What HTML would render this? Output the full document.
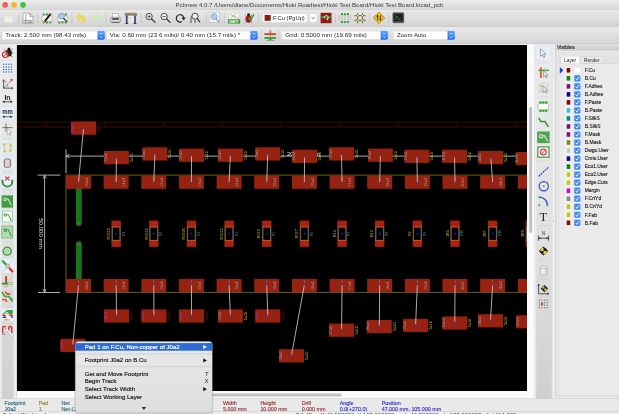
<!DOCTYPE html>
<html><head><meta charset="utf-8"><title>Pcbnew</title>
<style>
html,body{margin:0;padding:0;background:#ececec;overflow:hidden}
svg{display:block;will-change:transform}
text{font-family:"Liberation Sans",sans-serif;white-space:pre}
.serif{font-family:"Liberation Serif",serif}
</style></head><body>
<svg width="619" height="414" viewBox="0 0 619 414">
<defs>
<linearGradient id="gT" x1="0" y1="0" x2="0" y2="1"><stop offset="0" stop-color="#ededed"/><stop offset="1" stop-color="#d8d8d8"/></linearGradient>
<linearGradient id="gB1" x1="0" y1="0" x2="0" y2="1"><stop offset="0" stop-color="#e8e8e8"/><stop offset="1" stop-color="#d3d3d3"/></linearGradient>
<linearGradient id="gB2" x1="0" y1="0" x2="0" y2="1"><stop offset="0" stop-color="#e9e9e9"/><stop offset="1" stop-color="#d5d5d5"/></linearGradient>
<linearGradient id="gV" x1="0" y1="0" x2="0" y2="1"><stop offset="0" stop-color="#ebebeb"/><stop offset="0.5" stop-color="#e2e2e2"/><stop offset="1" stop-color="#d0d0d0"/></linearGradient>
<linearGradient id="gP" x1="0" y1="0" x2="0" y2="1"><stop offset="0" stop-color="#e0e0e0"/><stop offset="1" stop-color="#cbcbcb"/></linearGradient>
<linearGradient id="gBlue" x1="0" y1="0" x2="0" y2="1"><stop offset="0" stop-color="#5aa2fa"/><stop offset="1" stop-color="#1f6df2"/></linearGradient>
<linearGradient id="gMenu" x1="0" y1="0" x2="0" y2="1"><stop offset="0" stop-color="#e9e9e9"/><stop offset="1" stop-color="#dedede"/></linearGradient>
<clipPath id="cv"><rect x="17" y="45" width="510" height="346"/></clipPath>
<clipPath id="bot"><rect x="0" y="411.5" width="619" height="2.5"/></clipPath>
</defs>

<rect x="0" y="0" width="619" height="414" fill="#ececec" />
<rect x="0" y="0" width="619" height="9.5" fill="url(#gT)" />
<rect x="0" y="9.5" width="619" height="0.6" fill="#c9c9c9" />
<rect x="0" y="10" width="619" height="16.5" fill="url(#gB1)" />
<rect x="0" y="26.4" width="619" height="0.6" fill="#c2c2c2" />
<rect x="0" y="27" width="619" height="16.5" fill="url(#gB2)" />
<rect x="0" y="43.4" width="619" height="0.6" fill="#bcbcbc" />
<circle cx="5.2" cy="4.9" r="2.8" fill="#f25e57"/>
<circle cx="14.1" cy="4.9" r="2.8" fill="#f5b52f"/>
<circle cx="23.0" cy="4.9" r="2.8" fill="#3cc23f"/>
<text x="309.5" y="7.1" font-size="6.1" fill="#3c3c3c" textLength="268" lengthAdjust="spacingAndGlyphs" text-anchor="middle">Pcbnew 4.0.7 /Users/dlane/Documents/Hioki Roadtest/Hioki Test Board/Hioki Test Board.kicad_pcb</text>
<rect x="17" y="45" width="510" height="346" fill="#000" />
<g clip-path="url(#cv)">
<line x1="17" y1="122" x2="527" y2="122" stroke="#54100c" stroke-width="0.7" />
<line x1="17" y1="127.1" x2="527" y2="127.1" stroke="#54100c" stroke-width="0.7" />
<line x1="46.2" y1="122" x2="46.2" y2="127.1" stroke="#54100c" stroke-width="0.7" />
<line x1="104.9" y1="122" x2="104.9" y2="127.1" stroke="#54100c" stroke-width="0.7" />
<line x1="163.60000000000002" y1="122" x2="163.60000000000002" y2="127.1" stroke="#54100c" stroke-width="0.7" />
<line x1="222.3" y1="122" x2="222.3" y2="127.1" stroke="#54100c" stroke-width="0.7" />
<line x1="281.0" y1="122" x2="281.0" y2="127.1" stroke="#54100c" stroke-width="0.7" />
<line x1="339.7" y1="122" x2="339.7" y2="127.1" stroke="#54100c" stroke-width="0.7" />
<line x1="398.40000000000003" y1="122" x2="398.40000000000003" y2="127.1" stroke="#54100c" stroke-width="0.7" />
<line x1="457.1" y1="122" x2="457.1" y2="127.1" stroke="#54100c" stroke-width="0.7" />
<line x1="515.8000000000001" y1="122" x2="515.8000000000001" y2="127.1" stroke="#54100c" stroke-width="0.7" />
<line x1="66" y1="175.1" x2="527" y2="175.1" stroke="#786a1a" stroke-width="0.9" />
<line x1="66" y1="292.4" x2="527" y2="292.4" stroke="#786a1a" stroke-width="0.9" />
<line x1="66" y1="175.1" x2="66" y2="292.4" stroke="#786a1a" stroke-width="0.9" />
<line x1="66" y1="156.1" x2="527" y2="156.1" stroke="#d8d8d8" stroke-width="0.8" />
<line x1="66" y1="149.4" x2="66" y2="173.4" stroke="#d8d8d8" stroke-width="0.8" />
<path d="M69.5 154.3 L66 156.1 L69.5 157.9" fill="none" stroke="#d8d8d8" stroke-width="0.7"/>
<text x="287" y="155.6" font-size="6" fill="#e8e8e8" textLength="33" lengthAdjust="spacingAndGlyphs">200.000 mm</text>
<line x1="44.6" y1="175.3" x2="44.6" y2="292.3" stroke="#d8d8d8" stroke-width="0.8" />
<line x1="37.6" y1="175.1" x2="60.3" y2="175.1" stroke="#d8d8d8" stroke-width="0.8" />
<line x1="38" y1="292.5" x2="60" y2="292.5" stroke="#d8d8d8" stroke-width="0.8" />
<path d="M43 178.6 L44.6 175.3 L46.2 178.6 M43 289 L44.6 292.3 L46.2 289" fill="none" stroke="#d8d8d8" stroke-width="0.7"/>
<text transform="translate(39.3 218.2) rotate(90)" font-size="6" fill="#dcdcdc" textLength="30.6" lengthAdjust="spacingAndGlyphs">50.000 mm</text>
<path d="M75.8 188 V223 A3 3 0 0 0 81.8 223 V188 Z" fill="#1d721d"/>
<path d="M75.8 280 V244.3 A3 3 0 0 1 81.8 244.3 V280 Z" fill="#1d721d"/>
<circle cx="78.8" cy="223" r="0.7" fill="#58a858"/><circle cx="78.8" cy="244.3" r="0.7" fill="#58a858"/>
<rect x="71" y="121.5" width="25" height="13.2" fill="#97220f" />
<text transform="translate(73.60 132.60) rotate(-90)" font-size="4" fill="#b030b0" textLength="9" lengthAdjust="spacingAndGlyphs">J0a1</text>
<text transform="translate(99.90 132.30) rotate(-90)" font-size="3.9" fill="#7a1818" textLength="8.4" lengthAdjust="spacingAndGlyphs">J0a1</text>
<rect x="66.0" y="175.6" width="25" height="13.2" fill="#97220f" />
<text transform="translate(87.80 186.70) rotate(-90)" font-size="4" fill="#9aa0a8" textLength="9" lengthAdjust="spacingAndGlyphs">J0a1</text>
<rect x="66.0" y="279" width="25" height="13.2" fill="#97220f" />
<text transform="translate(87.80 290.10) rotate(-90)" font-size="4" fill="#9aa0a8" textLength="9" lengthAdjust="spacingAndGlyphs">J0a1</text>
<rect x="60.3" y="338.8" width="25" height="13.2" fill="#97220f" />
<text transform="translate(62.90 349.90) rotate(-90)" font-size="4" fill="#b030b0" textLength="9" lengthAdjust="spacingAndGlyphs">J0a1</text>
<text transform="translate(89.20 349.60) rotate(-90)" font-size="3.9" fill="#7a1818" textLength="8.4" lengthAdjust="spacingAndGlyphs">J0a1</text>
<rect x="103.9" y="151" width="25" height="13.2" fill="#97220f" />
<text transform="translate(106.50 162.10) rotate(-90)" font-size="4" fill="#9aa0a8" textLength="9" lengthAdjust="spacingAndGlyphs">J1a2</text>
<text transform="translate(132.80 161.80) rotate(-90)" font-size="3.9" fill="#c8c020" textLength="8.4" lengthAdjust="spacingAndGlyphs">5x10</text>
<rect x="103.65" y="175.6" width="25" height="13.2" fill="#97220f" />
<text transform="translate(125.45 186.70) rotate(-90)" font-size="4" fill="#9aa0a8" textLength="9" lengthAdjust="spacingAndGlyphs">J1a1</text>
<rect x="103.65" y="279" width="25" height="13.2" fill="#97220f" />
<text transform="translate(125.45 290.10) rotate(-90)" font-size="4" fill="#9aa0a8" textLength="9" lengthAdjust="spacingAndGlyphs">J1a1</text>
<rect x="104" y="309.4" width="25" height="13.2" fill="#97220f" />
<text transform="translate(106.60 320.50) rotate(-90)" font-size="4" fill="#b030b0" textLength="9" lengthAdjust="spacingAndGlyphs">J1a1</text>
<text transform="translate(132.90 320.20) rotate(-90)" font-size="3.9" fill="#7a1818" textLength="8.4" lengthAdjust="spacingAndGlyphs">J0a1</text>
<rect x="142.4" y="147.3" width="25" height="13.2" fill="#97220f" />
<text transform="translate(145.00 158.40) rotate(-90)" font-size="4" fill="#9aa0a8" textLength="9" lengthAdjust="spacingAndGlyphs">J2a2</text>
<text transform="translate(171.30 158.10) rotate(-90)" font-size="3.9" fill="#c8c020" textLength="8.4" lengthAdjust="spacingAndGlyphs">5x10</text>
<rect x="141.3" y="175.6" width="25" height="13.2" fill="#97220f" />
<text transform="translate(163.10 186.70) rotate(-90)" font-size="4" fill="#9aa0a8" textLength="9" lengthAdjust="spacingAndGlyphs">J2a1</text>
<rect x="141.3" y="279" width="25" height="13.2" fill="#97220f" />
<text transform="translate(163.10 290.10) rotate(-90)" font-size="4" fill="#9aa0a8" textLength="9" lengthAdjust="spacingAndGlyphs">J2a1</text>
<rect x="141.4" y="309.4" width="25" height="13.2" fill="#97220f" />
<text transform="translate(144.00 320.50) rotate(-90)" font-size="4" fill="#b030b0" textLength="9" lengthAdjust="spacingAndGlyphs">J2a1</text>
<text transform="translate(170.30 320.20) rotate(-90)" font-size="3.9" fill="#7a1818" textLength="8.4" lengthAdjust="spacingAndGlyphs">J0a1</text>
<rect x="179" y="148.6" width="25" height="13.2" fill="#97220f" />
<text transform="translate(181.60 159.70) rotate(-90)" font-size="4" fill="#9aa0a8" textLength="9" lengthAdjust="spacingAndGlyphs">J3a2</text>
<text transform="translate(207.90 159.40) rotate(-90)" font-size="3.9" fill="#c8c020" textLength="8.4" lengthAdjust="spacingAndGlyphs">5x10</text>
<rect x="178.95" y="175.6" width="25" height="13.2" fill="#97220f" />
<text transform="translate(200.75 186.70) rotate(-90)" font-size="4" fill="#9aa0a8" textLength="9" lengthAdjust="spacingAndGlyphs">J3a1</text>
<rect x="178.95" y="279" width="25" height="13.2" fill="#97220f" />
<text transform="translate(200.75 290.10) rotate(-90)" font-size="4" fill="#9aa0a8" textLength="9" lengthAdjust="spacingAndGlyphs">J3a1</text>
<rect x="179" y="309.4" width="25" height="13.2" fill="#97220f" />
<text transform="translate(181.60 320.50) rotate(-90)" font-size="4" fill="#b030b0" textLength="9" lengthAdjust="spacingAndGlyphs">J3a1</text>
<text transform="translate(207.90 320.20) rotate(-90)" font-size="3.9" fill="#7a1818" textLength="8.4" lengthAdjust="spacingAndGlyphs">J0a1</text>
<rect x="217.9" y="148.6" width="25" height="13.2" fill="#97220f" />
<text transform="translate(220.50 159.70) rotate(-90)" font-size="4" fill="#9aa0a8" textLength="9" lengthAdjust="spacingAndGlyphs">J4a2</text>
<text transform="translate(246.80 159.40) rotate(-90)" font-size="3.9" fill="#c8c020" textLength="8.4" lengthAdjust="spacingAndGlyphs">5x10</text>
<rect x="216.6" y="175.6" width="25" height="13.2" fill="#97220f" />
<text transform="translate(238.40 186.70) rotate(-90)" font-size="4" fill="#9aa0a8" textLength="9" lengthAdjust="spacingAndGlyphs">J4a1</text>
<rect x="216.6" y="279" width="25" height="13.2" fill="#97220f" />
<text transform="translate(238.40 290.10) rotate(-90)" font-size="4" fill="#9aa0a8" textLength="9" lengthAdjust="spacingAndGlyphs">J4a1</text>
<rect x="217.9" y="309.4" width="25" height="13.2" fill="#97220f" />
<text transform="translate(220.50 320.50) rotate(-90)" font-size="4" fill="#9aa0a8" textLength="9" lengthAdjust="spacingAndGlyphs">J4a2</text>
<text transform="translate(246.80 320.20) rotate(-90)" font-size="3.9" fill="#c8c020" textLength="8.4" lengthAdjust="spacingAndGlyphs">5x10</text>
<rect x="255.2" y="147.3" width="25" height="13.2" fill="#97220f" />
<text transform="translate(257.80 158.40) rotate(-90)" font-size="4" fill="#9aa0a8" textLength="9" lengthAdjust="spacingAndGlyphs">J5a2</text>
<text transform="translate(284.10 158.10) rotate(-90)" font-size="3.9" fill="#c8c020" textLength="8.4" lengthAdjust="spacingAndGlyphs">5x10</text>
<rect x="254.25" y="175.6" width="25" height="13.2" fill="#97220f" />
<text transform="translate(276.05 186.70) rotate(-90)" font-size="4" fill="#9aa0a8" textLength="9" lengthAdjust="spacingAndGlyphs">J5a1</text>
<rect x="254.25" y="279" width="25" height="13.2" fill="#97220f" />
<text transform="translate(276.05 290.10) rotate(-90)" font-size="4" fill="#9aa0a8" textLength="9" lengthAdjust="spacingAndGlyphs">J5a1</text>
<rect x="255.3" y="309.4" width="25" height="13.2" fill="#97220f" />
<text transform="translate(257.90 320.50) rotate(-90)" font-size="4" fill="#b030b0" textLength="9" lengthAdjust="spacingAndGlyphs">J5a1</text>
<text transform="translate(284.20 320.20) rotate(-90)" font-size="3.9" fill="#7a1818" textLength="8.4" lengthAdjust="spacingAndGlyphs">J0a1</text>
<rect x="292" y="149.7" width="25" height="13.2" fill="#97220f" />
<text transform="translate(294.60 160.80) rotate(-90)" font-size="4" fill="#9aa0a8" textLength="9" lengthAdjust="spacingAndGlyphs">J6a2</text>
<text transform="translate(320.90 160.50) rotate(-90)" font-size="3.9" fill="#c8c020" textLength="8.4" lengthAdjust="spacingAndGlyphs">5x10</text>
<rect x="291.9" y="175.6" width="25" height="13.2" fill="#97220f" />
<text transform="translate(313.70 186.70) rotate(-90)" font-size="4" fill="#9aa0a8" textLength="9" lengthAdjust="spacingAndGlyphs">J6a1</text>
<rect x="291.9" y="279" width="25" height="13.2" fill="#97220f" />
<text transform="translate(313.70 290.10) rotate(-90)" font-size="4" fill="#9aa0a8" textLength="9" lengthAdjust="spacingAndGlyphs">J6a1</text>
<rect x="279" y="349.2" width="25" height="13.2" fill="#97220f" />
<text transform="translate(281.60 360.30) rotate(-90)" font-size="4" fill="#9aa0a8" textLength="9" lengthAdjust="spacingAndGlyphs">J6a2</text>
<text transform="translate(307.90 360.00) rotate(-90)" font-size="3.9" fill="#c8c020" textLength="8.4" lengthAdjust="spacingAndGlyphs">5x10</text>
<rect x="329" y="147.3" width="25" height="13.2" fill="#97220f" />
<text transform="translate(331.60 158.40) rotate(-90)" font-size="4" fill="#9aa0a8" textLength="9" lengthAdjust="spacingAndGlyphs">J7a2</text>
<text transform="translate(357.90 158.10) rotate(-90)" font-size="3.9" fill="#c8c020" textLength="8.4" lengthAdjust="spacingAndGlyphs">5x10</text>
<rect x="329.55" y="175.6" width="25" height="13.2" fill="#97220f" />
<text transform="translate(351.35 186.70) rotate(-90)" font-size="4" fill="#9aa0a8" textLength="9" lengthAdjust="spacingAndGlyphs">J7a1</text>
<rect x="329.55" y="279" width="25" height="13.2" fill="#97220f" />
<text transform="translate(351.35 290.10) rotate(-90)" font-size="4" fill="#9aa0a8" textLength="9" lengthAdjust="spacingAndGlyphs">J7a1</text>
<rect x="329.1" y="323.6" width="25" height="13.2" fill="#97220f" />
<text transform="translate(331.70 334.70) rotate(-90)" font-size="4" fill="#9aa0a8" textLength="9" lengthAdjust="spacingAndGlyphs">J7a2</text>
<text transform="translate(358.00 334.40) rotate(-90)" font-size="3.9" fill="#c8c020" textLength="8.4" lengthAdjust="spacingAndGlyphs">5x10</text>
<rect x="367.9" y="148.6" width="25" height="13.2" fill="#97220f" />
<text transform="translate(370.50 159.70) rotate(-90)" font-size="4" fill="#9aa0a8" textLength="9" lengthAdjust="spacingAndGlyphs">J8a2</text>
<text transform="translate(396.80 159.40) rotate(-90)" font-size="3.9" fill="#c8c020" textLength="8.4" lengthAdjust="spacingAndGlyphs">5x10</text>
<rect x="367.2" y="175.6" width="25" height="13.2" fill="#97220f" />
<text transform="translate(389.00 186.70) rotate(-90)" font-size="4" fill="#9aa0a8" textLength="9" lengthAdjust="spacingAndGlyphs">J8a1</text>
<rect x="367.2" y="279" width="25" height="13.2" fill="#97220f" />
<text transform="translate(389.00 290.10) rotate(-90)" font-size="4" fill="#9aa0a8" textLength="9" lengthAdjust="spacingAndGlyphs">J8a1</text>
<rect x="366.8" y="320" width="25" height="13.2" fill="#97220f" />
<text transform="translate(369.40 331.10) rotate(-90)" font-size="4" fill="#9aa0a8" textLength="9" lengthAdjust="spacingAndGlyphs">J8a2</text>
<text transform="translate(395.70 330.80) rotate(-90)" font-size="3.9" fill="#c8c020" textLength="8.4" lengthAdjust="spacingAndGlyphs">5x10</text>
<rect x="404.4" y="149.7" width="25" height="13.2" fill="#97220f" />
<text transform="translate(407.00 160.80) rotate(-90)" font-size="4" fill="#9aa0a8" textLength="9" lengthAdjust="spacingAndGlyphs">J9a2</text>
<text transform="translate(433.30 160.50) rotate(-90)" font-size="3.9" fill="#c8c020" textLength="8.4" lengthAdjust="spacingAndGlyphs">5x10</text>
<rect x="404.85" y="175.6" width="25" height="13.2" fill="#97220f" />
<text transform="translate(426.65 186.70) rotate(-90)" font-size="4" fill="#9aa0a8" textLength="9" lengthAdjust="spacingAndGlyphs">J9a1</text>
<rect x="404.85" y="279" width="25" height="13.2" fill="#97220f" />
<text transform="translate(426.65 290.10) rotate(-90)" font-size="4" fill="#9aa0a8" textLength="9" lengthAdjust="spacingAndGlyphs">J9a1</text>
<rect x="403.1" y="318.8" width="25" height="13.2" fill="#97220f" />
<text transform="translate(405.70 329.90) rotate(-90)" font-size="4" fill="#9aa0a8" textLength="9" lengthAdjust="spacingAndGlyphs">J9a2</text>
<text transform="translate(432.00 329.60) rotate(-90)" font-size="3.9" fill="#c8c020" textLength="8.4" lengthAdjust="spacingAndGlyphs">5x10</text>
<rect x="442" y="149.7" width="25" height="13.2" fill="#97220f" />
<text transform="translate(444.60 160.80) rotate(-90)" font-size="4" fill="#9aa0a8" textLength="9" lengthAdjust="spacingAndGlyphs">J10a2</text>
<text transform="translate(470.90 160.50) rotate(-90)" font-size="3.9" fill="#c8c020" textLength="8.4" lengthAdjust="spacingAndGlyphs">5x10</text>
<rect x="442.5" y="175.6" width="25" height="13.2" fill="#97220f" />
<text transform="translate(464.30 186.70) rotate(-90)" font-size="4" fill="#9aa0a8" textLength="9" lengthAdjust="spacingAndGlyphs">J10a1</text>
<rect x="442.5" y="279" width="25" height="13.2" fill="#97220f" />
<text transform="translate(464.30 290.10) rotate(-90)" font-size="4" fill="#9aa0a8" textLength="9" lengthAdjust="spacingAndGlyphs">J10a1</text>
<rect x="442.3" y="316.4" width="25" height="13.2" fill="#97220f" />
<text transform="translate(444.90 327.50) rotate(-90)" font-size="4" fill="#9aa0a8" textLength="9" lengthAdjust="spacingAndGlyphs">J10a2</text>
<text transform="translate(471.20 327.20) rotate(-90)" font-size="3.9" fill="#c8c020" textLength="8.4" lengthAdjust="spacingAndGlyphs">5x10</text>
<rect x="478.3" y="151" width="25" height="13.2" fill="#97220f" />
<text transform="translate(480.90 162.10) rotate(-90)" font-size="4" fill="#9aa0a8" textLength="9" lengthAdjust="spacingAndGlyphs">J11a2</text>
<text transform="translate(507.20 161.80) rotate(-90)" font-size="3.9" fill="#c8c020" textLength="8.4" lengthAdjust="spacingAndGlyphs">5x10</text>
<rect x="480.15" y="175.6" width="25" height="13.2" fill="#97220f" />
<text transform="translate(501.95 186.70) rotate(-90)" font-size="4" fill="#9aa0a8" textLength="9" lengthAdjust="spacingAndGlyphs">J11a1</text>
<rect x="480.15" y="279" width="25" height="13.2" fill="#97220f" />
<text transform="translate(501.95 290.10) rotate(-90)" font-size="4" fill="#9aa0a8" textLength="9" lengthAdjust="spacingAndGlyphs">J11a1</text>
<rect x="478" y="314.2" width="25" height="13.2" fill="#97220f" />
<text transform="translate(480.60 325.30) rotate(-90)" font-size="4" fill="#9aa0a8" textLength="9" lengthAdjust="spacingAndGlyphs">J11a2</text>
<text transform="translate(506.90 325.00) rotate(-90)" font-size="3.9" fill="#c8c020" textLength="8.4" lengthAdjust="spacingAndGlyphs">5x10</text>
<rect x="515.8" y="152" width="25" height="13.2" fill="#97220f" />
<text transform="translate(518.40 163.10) rotate(-90)" font-size="4" fill="#9aa0a8" textLength="9" lengthAdjust="spacingAndGlyphs">J12a2</text>
<text transform="translate(544.70 162.80) rotate(-90)" font-size="3.9" fill="#c8c020" textLength="8.4" lengthAdjust="spacingAndGlyphs">5x10</text>
<rect x="517.8" y="175.6" width="25" height="13.2" fill="#97220f" />
<text transform="translate(539.60 186.70) rotate(-90)" font-size="4" fill="#9aa0a8" textLength="9" lengthAdjust="spacingAndGlyphs">J12a1</text>
<rect x="517.8" y="279" width="25" height="13.2" fill="#97220f" />
<text transform="translate(539.60 290.10) rotate(-90)" font-size="4" fill="#9aa0a8" textLength="9" lengthAdjust="spacingAndGlyphs">J12a1</text>
<rect x="516" y="315.2" width="25" height="13.2" fill="#97220f" />
<text transform="translate(518.60 326.30) rotate(-90)" font-size="4" fill="#9aa0a8" textLength="9" lengthAdjust="spacingAndGlyphs">J12a2</text>
<text transform="translate(544.90 326.00) rotate(-90)" font-size="3.9" fill="#c8c020" textLength="8.4" lengthAdjust="spacingAndGlyphs">5x10</text>
<rect x="111.45" y="220.6" width="9.4" height="26.3" fill="#a8220f" />
<rect x="112.35" y="227.6" width="7.6" height="12.2" fill="#000" />
<line x1="111.75" y1="226.9" x2="120.55" y2="226.9" stroke="#c8742a" stroke-width="0.6" />
<line x1="111.75" y1="240.5" x2="120.55" y2="240.5" stroke="#c8742a" stroke-width="0.6" />
<line x1="112.4" y1="227.2" x2="112.4" y2="240.2" stroke="#4f9a9a" stroke-width="0.7" />
<line x1="119.9" y1="227.2" x2="119.9" y2="240.2" stroke="#4f9a9a" stroke-width="0.7" />
<path d="M115.05 233.7 h2.2 M116.15 232.6 v2.2" stroke="#1c2ccc" stroke-width="0.7"/>
<text transform="translate(109.85 239.40) rotate(-90)" font-size="3.6" fill="#c4bc20" textLength="11.4" lengthAdjust="spacingAndGlyphs">R0015</text>
<text transform="translate(124.55 236.2) rotate(-90)" font-size="3.4" fill="#2a9a9a">R1</text>
<text x="116.15" y="225.4" font-size="2.6" fill="#6a5a58" text-anchor="middle">1</text>
<text x="116.15" y="244.9" font-size="2.6" fill="#6a5a58" text-anchor="middle">2</text>
<rect x="149.1" y="220.6" width="9.4" height="26.3" fill="#a8220f" />
<rect x="150.0" y="227.6" width="7.6" height="12.2" fill="#000" />
<line x1="149.40000000000003" y1="226.9" x2="158.20000000000002" y2="226.9" stroke="#c8742a" stroke-width="0.6" />
<line x1="149.40000000000003" y1="240.5" x2="158.20000000000002" y2="240.5" stroke="#c8742a" stroke-width="0.6" />
<line x1="150.05" y1="227.2" x2="150.05" y2="240.2" stroke="#4f9a9a" stroke-width="0.7" />
<line x1="157.55" y1="227.2" x2="157.55" y2="240.2" stroke="#4f9a9a" stroke-width="0.7" />
<path d="M152.70 233.7 h2.2 M153.80 232.6 v2.2" stroke="#1c2ccc" stroke-width="0.7"/>
<text transform="translate(147.50 239.40) rotate(-90)" font-size="3.6" fill="#c4bc20" textLength="11.4" lengthAdjust="spacingAndGlyphs">R0015</text>
<text transform="translate(162.20 236.2) rotate(-90)" font-size="3.4" fill="#2a9a9a">R2</text>
<text x="153.80" y="225.4" font-size="2.6" fill="#6a5a58" text-anchor="middle">1</text>
<text x="153.80" y="244.9" font-size="2.6" fill="#6a5a58" text-anchor="middle">2</text>
<rect x="186.75" y="220.6" width="9.4" height="26.3" fill="#a8220f" />
<rect x="187.65" y="227.6" width="7.6" height="12.2" fill="#000" />
<line x1="187.05" y1="226.9" x2="195.85" y2="226.9" stroke="#c8742a" stroke-width="0.6" />
<line x1="187.05" y1="240.5" x2="195.85" y2="240.5" stroke="#c8742a" stroke-width="0.6" />
<line x1="187.7" y1="227.2" x2="187.7" y2="240.2" stroke="#4f9a9a" stroke-width="0.7" />
<line x1="195.2" y1="227.2" x2="195.2" y2="240.2" stroke="#4f9a9a" stroke-width="0.7" />
<path d="M190.35 233.7 h2.2 M191.45 232.6 v2.2" stroke="#1c2ccc" stroke-width="0.7"/>
<text transform="translate(185.15 239.40) rotate(-90)" font-size="3.6" fill="#c4bc20" textLength="11.4" lengthAdjust="spacingAndGlyphs">R0025</text>
<text transform="translate(199.85 236.2) rotate(-90)" font-size="3.4" fill="#2a9a9a">R3</text>
<text x="191.45" y="225.4" font-size="2.6" fill="#6a5a58" text-anchor="middle">1</text>
<text x="191.45" y="244.9" font-size="2.6" fill="#6a5a58" text-anchor="middle">2</text>
<rect x="224.4" y="220.6" width="9.4" height="26.3" fill="#a8220f" />
<rect x="225.3" y="227.6" width="7.6" height="12.2" fill="#000" />
<line x1="224.70000000000002" y1="226.9" x2="233.5" y2="226.9" stroke="#c8742a" stroke-width="0.6" />
<line x1="224.70000000000002" y1="240.5" x2="233.5" y2="240.5" stroke="#c8742a" stroke-width="0.6" />
<line x1="225.35" y1="227.2" x2="225.35" y2="240.2" stroke="#4f9a9a" stroke-width="0.7" />
<line x1="232.85" y1="227.2" x2="232.85" y2="240.2" stroke="#4f9a9a" stroke-width="0.7" />
<path d="M228.00 233.7 h2.2 M229.10 232.6 v2.2" stroke="#1c2ccc" stroke-width="0.7"/>
<text transform="translate(222.80 239.40) rotate(-90)" font-size="3.6" fill="#c4bc20" textLength="11.4" lengthAdjust="spacingAndGlyphs">R0015</text>
<text transform="translate(237.50 236.2) rotate(-90)" font-size="3.4" fill="#2a9a9a">R4</text>
<text x="229.10" y="225.4" font-size="2.6" fill="#6a5a58" text-anchor="middle">1</text>
<text x="229.10" y="244.9" font-size="2.6" fill="#6a5a58" text-anchor="middle">2</text>
<rect x="262.05" y="220.6" width="9.4" height="26.3" fill="#a8220f" />
<rect x="262.95" y="227.6" width="7.6" height="12.2" fill="#000" />
<line x1="262.35" y1="226.9" x2="271.15000000000003" y2="226.9" stroke="#c8742a" stroke-width="0.6" />
<line x1="262.35" y1="240.5" x2="271.15000000000003" y2="240.5" stroke="#c8742a" stroke-width="0.6" />
<line x1="263.0" y1="227.2" x2="263.0" y2="240.2" stroke="#4f9a9a" stroke-width="0.7" />
<line x1="270.5" y1="227.2" x2="270.5" y2="240.2" stroke="#4f9a9a" stroke-width="0.7" />
<path d="M265.65 233.7 h2.2 M266.75 232.6 v2.2" stroke="#1c2ccc" stroke-width="0.7"/>
<text transform="translate(260.45 238.30) rotate(-90)" font-size="3.6" fill="#c4bc20" textLength="9.2" lengthAdjust="spacingAndGlyphs">R015</text>
<text transform="translate(275.15 236.2) rotate(-90)" font-size="3.4" fill="#2a9a9a">R5</text>
<text x="266.75" y="225.4" font-size="2.6" fill="#6a5a58" text-anchor="middle">1</text>
<text x="266.75" y="244.9" font-size="2.6" fill="#6a5a58" text-anchor="middle">2</text>
<rect x="299.7" y="220.6" width="9.4" height="26.3" fill="#a8220f" />
<rect x="300.6" y="227.6" width="7.6" height="12.2" fill="#000" />
<line x1="300.0" y1="226.9" x2="308.8" y2="226.9" stroke="#c8742a" stroke-width="0.6" />
<line x1="300.0" y1="240.5" x2="308.8" y2="240.5" stroke="#c8742a" stroke-width="0.6" />
<line x1="300.65" y1="227.2" x2="300.65" y2="240.2" stroke="#4f9a9a" stroke-width="0.7" />
<line x1="308.15" y1="227.2" x2="308.15" y2="240.2" stroke="#4f9a9a" stroke-width="0.7" />
<path d="M303.30 233.7 h2.2 M304.40 232.6 v2.2" stroke="#1c2ccc" stroke-width="0.7"/>
<text transform="translate(298.10 238.30) rotate(-90)" font-size="3.6" fill="#c4bc20" textLength="9.2" lengthAdjust="spacingAndGlyphs">R027</text>
<text transform="translate(312.80 236.2) rotate(-90)" font-size="3.4" fill="#2a9a9a">R6</text>
<text x="304.40" y="225.4" font-size="2.6" fill="#6a5a58" text-anchor="middle">1</text>
<text x="304.40" y="244.9" font-size="2.6" fill="#6a5a58" text-anchor="middle">2</text>
<rect x="337.35" y="220.6" width="9.4" height="26.3" fill="#a8220f" />
<rect x="338.25" y="227.6" width="7.6" height="12.2" fill="#000" />
<line x1="337.65000000000003" y1="226.9" x2="346.45000000000005" y2="226.9" stroke="#c8742a" stroke-width="0.6" />
<line x1="337.65000000000003" y1="240.5" x2="346.45000000000005" y2="240.5" stroke="#c8742a" stroke-width="0.6" />
<line x1="338.3" y1="227.2" x2="338.3" y2="240.2" stroke="#4f9a9a" stroke-width="0.7" />
<line x1="345.8" y1="227.2" x2="345.8" y2="240.2" stroke="#4f9a9a" stroke-width="0.7" />
<path d="M340.95 233.7 h2.2 M342.05 232.6 v2.2" stroke="#1c2ccc" stroke-width="0.7"/>
<text transform="translate(335.75 237.10) rotate(-90)" font-size="3.6" fill="#c4bc20" textLength="6.8" lengthAdjust="spacingAndGlyphs">R15</text>
<text transform="translate(350.45 236.2) rotate(-90)" font-size="3.4" fill="#2a9a9a">R7</text>
<text x="342.05" y="225.4" font-size="2.6" fill="#6a5a58" text-anchor="middle">1</text>
<text x="342.05" y="244.9" font-size="2.6" fill="#6a5a58" text-anchor="middle">2</text>
<rect x="375.0" y="220.6" width="9.4" height="26.3" fill="#a8220f" />
<rect x="375.9" y="227.6" width="7.6" height="12.2" fill="#000" />
<line x1="375.3" y1="226.9" x2="384.1" y2="226.9" stroke="#c8742a" stroke-width="0.6" />
<line x1="375.3" y1="240.5" x2="384.1" y2="240.5" stroke="#c8742a" stroke-width="0.6" />
<line x1="375.95" y1="227.2" x2="375.95" y2="240.2" stroke="#4f9a9a" stroke-width="0.7" />
<line x1="383.45" y1="227.2" x2="383.45" y2="240.2" stroke="#4f9a9a" stroke-width="0.7" />
<path d="M378.60 233.7 h2.2 M379.70 232.6 v2.2" stroke="#1c2ccc" stroke-width="0.7"/>
<text transform="translate(373.40 237.10) rotate(-90)" font-size="3.6" fill="#c4bc20" textLength="6.8" lengthAdjust="spacingAndGlyphs">R15</text>
<text transform="translate(388.10 236.2) rotate(-90)" font-size="3.4" fill="#2a9a9a">R8</text>
<text x="379.70" y="225.4" font-size="2.6" fill="#6a5a58" text-anchor="middle">1</text>
<text x="379.70" y="244.9" font-size="2.6" fill="#6a5a58" text-anchor="middle">2</text>
<rect x="412.65" y="220.6" width="9.4" height="26.3" fill="#a8220f" />
<rect x="413.55" y="227.6" width="7.6" height="12.2" fill="#000" />
<line x1="412.95" y1="226.9" x2="421.75" y2="226.9" stroke="#c8742a" stroke-width="0.6" />
<line x1="412.95" y1="240.5" x2="421.75" y2="240.5" stroke="#c8742a" stroke-width="0.6" />
<line x1="413.59999999999997" y1="227.2" x2="413.59999999999997" y2="240.2" stroke="#4f9a9a" stroke-width="0.7" />
<line x1="421.09999999999997" y1="227.2" x2="421.09999999999997" y2="240.2" stroke="#4f9a9a" stroke-width="0.7" />
<path d="M416.25 233.7 h2.2 M417.35 232.6 v2.2" stroke="#1c2ccc" stroke-width="0.7"/>
<text transform="translate(411.05 236.00) rotate(-90)" font-size="3.6" fill="#c4bc20" textLength="4.6" lengthAdjust="spacingAndGlyphs">R3</text>
<text transform="translate(425.75 236.2) rotate(-90)" font-size="3.4" fill="#2a9a9a">R9</text>
<text x="417.35" y="225.4" font-size="2.6" fill="#6a5a58" text-anchor="middle">1</text>
<text x="417.35" y="244.9" font-size="2.6" fill="#6a5a58" text-anchor="middle">2</text>
<rect x="450.3" y="220.6" width="9.4" height="26.3" fill="#a8220f" />
<rect x="451.2" y="227.6" width="7.6" height="12.2" fill="#000" />
<line x1="450.6" y1="226.9" x2="459.40000000000003" y2="226.9" stroke="#c8742a" stroke-width="0.6" />
<line x1="450.6" y1="240.5" x2="459.40000000000003" y2="240.5" stroke="#c8742a" stroke-width="0.6" />
<line x1="451.25" y1="227.2" x2="451.25" y2="240.2" stroke="#4f9a9a" stroke-width="0.7" />
<line x1="458.75" y1="227.2" x2="458.75" y2="240.2" stroke="#4f9a9a" stroke-width="0.7" />
<path d="M453.90 233.7 h2.2 M455.00 232.6 v2.2" stroke="#1c2ccc" stroke-width="0.7"/>
<text transform="translate(448.70 237.10) rotate(-90)" font-size="3.6" fill="#c4bc20" textLength="6.8" lengthAdjust="spacingAndGlyphs">1R5</text>
<text transform="translate(463.40 236.2) rotate(-90)" font-size="3.4" fill="#2a9a9a">R10</text>
<text x="455.00" y="225.4" font-size="2.6" fill="#6a5a58" text-anchor="middle">1</text>
<text x="455.00" y="244.9" font-size="2.6" fill="#6a5a58" text-anchor="middle">2</text>
<rect x="487.95" y="220.6" width="9.4" height="26.3" fill="#a8220f" />
<rect x="488.85" y="227.6" width="7.6" height="12.2" fill="#000" />
<line x1="488.25" y1="226.9" x2="497.05" y2="226.9" stroke="#c8742a" stroke-width="0.6" />
<line x1="488.25" y1="240.5" x2="497.05" y2="240.5" stroke="#c8742a" stroke-width="0.6" />
<line x1="488.9" y1="227.2" x2="488.9" y2="240.2" stroke="#4f9a9a" stroke-width="0.7" />
<line x1="496.4" y1="227.2" x2="496.4" y2="240.2" stroke="#4f9a9a" stroke-width="0.7" />
<path d="M491.55 233.7 h2.2 M492.65 232.6 v2.2" stroke="#1c2ccc" stroke-width="0.7"/>
<text transform="translate(486.35 237.10) rotate(-90)" font-size="3.6" fill="#c4bc20" textLength="6.8" lengthAdjust="spacingAndGlyphs">2R7</text>
<text transform="translate(501.05 236.2) rotate(-90)" font-size="3.4" fill="#2a9a9a">R11</text>
<text x="492.65" y="225.4" font-size="2.6" fill="#6a5a58" text-anchor="middle">1</text>
<text x="492.65" y="244.9" font-size="2.6" fill="#6a5a58" text-anchor="middle">2</text>
<rect x="525.6" y="220.6" width="9.4" height="26.3" fill="#a8220f" />
<rect x="526.5" y="227.6" width="7.6" height="12.2" fill="#000" />
<line x1="525.8999999999999" y1="226.9" x2="534.6999999999999" y2="226.9" stroke="#c8742a" stroke-width="0.6" />
<line x1="525.8999999999999" y1="240.5" x2="534.6999999999999" y2="240.5" stroke="#c8742a" stroke-width="0.6" />
<line x1="526.55" y1="227.2" x2="526.55" y2="240.2" stroke="#4f9a9a" stroke-width="0.7" />
<line x1="534.05" y1="227.2" x2="534.05" y2="240.2" stroke="#4f9a9a" stroke-width="0.7" />
<path d="M529.20 233.7 h2.2 M530.30 232.6 v2.2" stroke="#1c2ccc" stroke-width="0.7"/>
<text transform="translate(524.00 237.10) rotate(-90)" font-size="3.6" fill="#c4bc20" textLength="6.8" lengthAdjust="spacingAndGlyphs">3R0</text>
<text transform="translate(538.70 236.2) rotate(-90)" font-size="3.4" fill="#2a9a9a">R12</text>
<text x="530.30" y="225.4" font-size="2.6" fill="#6a5a58" text-anchor="middle">1</text>
<text x="530.30" y="244.9" font-size="2.6" fill="#6a5a58" text-anchor="middle">2</text>
<line x1="83.5" y1="128.6" x2="78.5" y2="181.9" stroke="#d4d4d4" stroke-width="0.8" />
<line x1="78.5" y1="284.7" x2="72.8" y2="344.8" stroke="#d4d4d4" stroke-width="0.8" />
<line x1="116.4" y1="158.1" x2="116.15" y2="181.9" stroke="#d4d4d4" stroke-width="0.8" />
<line x1="116.15" y1="284.7" x2="116.5" y2="315.4" stroke="#d4d4d4" stroke-width="0.8" />
<line x1="154.9" y1="154.4" x2="153.8" y2="181.9" stroke="#d4d4d4" stroke-width="0.8" />
<line x1="153.8" y1="284.7" x2="153.9" y2="315.4" stroke="#d4d4d4" stroke-width="0.8" />
<line x1="191.5" y1="155.7" x2="191.45" y2="181.9" stroke="#d4d4d4" stroke-width="0.8" />
<line x1="191.45" y1="284.7" x2="191.5" y2="315.4" stroke="#d4d4d4" stroke-width="0.8" />
<line x1="230.4" y1="155.7" x2="229.1" y2="181.9" stroke="#d4d4d4" stroke-width="0.8" />
<line x1="229.1" y1="284.7" x2="230.4" y2="315.4" stroke="#d4d4d4" stroke-width="0.8" />
<line x1="267.7" y1="154.4" x2="266.75" y2="181.9" stroke="#d4d4d4" stroke-width="0.8" />
<line x1="266.75" y1="284.7" x2="267.8" y2="315.4" stroke="#d4d4d4" stroke-width="0.8" />
<line x1="304.5" y1="156.8" x2="304.4" y2="181.9" stroke="#d4d4d4" stroke-width="0.8" />
<line x1="304.4" y1="284.7" x2="291.5" y2="355.2" stroke="#d4d4d4" stroke-width="0.8" />
<line x1="341.5" y1="154.4" x2="342.05" y2="181.9" stroke="#d4d4d4" stroke-width="0.8" />
<line x1="342.05" y1="284.7" x2="341.6" y2="329.6" stroke="#d4d4d4" stroke-width="0.8" />
<line x1="380.4" y1="155.7" x2="379.7" y2="181.9" stroke="#d4d4d4" stroke-width="0.8" />
<line x1="379.7" y1="284.7" x2="379.3" y2="326.0" stroke="#d4d4d4" stroke-width="0.8" />
<line x1="416.9" y1="156.8" x2="417.35" y2="181.9" stroke="#d4d4d4" stroke-width="0.8" />
<line x1="417.35" y1="284.7" x2="415.6" y2="324.8" stroke="#d4d4d4" stroke-width="0.8" />
<line x1="454.5" y1="156.8" x2="455.0" y2="181.9" stroke="#d4d4d4" stroke-width="0.8" />
<line x1="455.0" y1="284.7" x2="454.8" y2="322.4" stroke="#d4d4d4" stroke-width="0.8" />
<line x1="490.8" y1="158.1" x2="492.65" y2="181.9" stroke="#d4d4d4" stroke-width="0.8" />
<line x1="492.65" y1="284.7" x2="490.5" y2="320.2" stroke="#d4d4d4" stroke-width="0.8" />
<circle cx="83.50" cy="128.50" r="0.9" fill="#3a3ad0"/>
<circle cx="78.50" cy="182.60" r="0.9" fill="#3a3ad0"/>
<circle cx="78.50" cy="284.70" r="0.9" fill="#3a3ad0"/>
<circle cx="72.80" cy="344.90" r="0.9" fill="#3a3ad0"/>
<text x="78.50" y="179.60" font-size="3" fill="#a89088" text-anchor="middle">1</text>
<text x="78.50" y="283.00" font-size="3" fill="#a89088" text-anchor="middle">1</text>
<circle cx="116.40" cy="158.00" r="0.9" fill="#3a3ad0"/>
<circle cx="116.15" cy="182.60" r="0.9" fill="#3a3ad0"/>
<circle cx="116.15" cy="284.70" r="0.9" fill="#3a3ad0"/>
<circle cx="116.50" cy="315.50" r="0.9" fill="#3a3ad0"/>
<text x="116.15" y="179.60" font-size="3" fill="#a89088" text-anchor="middle">1</text>
<text x="116.15" y="283.00" font-size="3" fill="#a89088" text-anchor="middle">1</text>
<circle cx="154.90" cy="154.30" r="0.9" fill="#3a3ad0"/>
<circle cx="153.80" cy="182.60" r="0.9" fill="#3a3ad0"/>
<circle cx="153.80" cy="284.70" r="0.9" fill="#3a3ad0"/>
<circle cx="153.90" cy="315.50" r="0.9" fill="#3a3ad0"/>
<text x="153.80" y="179.60" font-size="3" fill="#a89088" text-anchor="middle">1</text>
<text x="153.80" y="283.00" font-size="3" fill="#a89088" text-anchor="middle">1</text>
<circle cx="191.50" cy="155.60" r="0.9" fill="#3a3ad0"/>
<circle cx="191.45" cy="182.60" r="0.9" fill="#3a3ad0"/>
<circle cx="191.45" cy="284.70" r="0.9" fill="#3a3ad0"/>
<circle cx="191.50" cy="315.50" r="0.9" fill="#3a3ad0"/>
<text x="191.45" y="179.60" font-size="3" fill="#a89088" text-anchor="middle">1</text>
<text x="191.45" y="283.00" font-size="3" fill="#a89088" text-anchor="middle">1</text>
<circle cx="230.40" cy="155.60" r="0.9" fill="#3a3ad0"/>
<circle cx="229.10" cy="182.60" r="0.9" fill="#3a3ad0"/>
<circle cx="229.10" cy="284.70" r="0.9" fill="#3a3ad0"/>
<circle cx="230.40" cy="315.50" r="0.9" fill="#3a3ad0"/>
<text x="229.10" y="179.60" font-size="3" fill="#a89088" text-anchor="middle">1</text>
<text x="229.10" y="283.00" font-size="3" fill="#a89088" text-anchor="middle">1</text>
<circle cx="267.70" cy="154.30" r="0.9" fill="#3a3ad0"/>
<circle cx="266.75" cy="182.60" r="0.9" fill="#3a3ad0"/>
<circle cx="266.75" cy="284.70" r="0.9" fill="#3a3ad0"/>
<circle cx="267.80" cy="315.50" r="0.9" fill="#3a3ad0"/>
<text x="266.75" y="179.60" font-size="3" fill="#a89088" text-anchor="middle">1</text>
<text x="266.75" y="283.00" font-size="3" fill="#a89088" text-anchor="middle">1</text>
<circle cx="304.50" cy="156.70" r="0.9" fill="#3a3ad0"/>
<circle cx="304.40" cy="182.60" r="0.9" fill="#3a3ad0"/>
<circle cx="304.40" cy="284.70" r="0.9" fill="#3a3ad0"/>
<circle cx="291.50" cy="355.30" r="0.9" fill="#3a3ad0"/>
<text x="304.40" y="179.60" font-size="3" fill="#a89088" text-anchor="middle">1</text>
<text x="304.40" y="283.00" font-size="3" fill="#a89088" text-anchor="middle">1</text>
<circle cx="341.50" cy="154.30" r="0.9" fill="#3a3ad0"/>
<circle cx="342.05" cy="182.60" r="0.9" fill="#3a3ad0"/>
<circle cx="342.05" cy="284.70" r="0.9" fill="#3a3ad0"/>
<circle cx="341.60" cy="329.70" r="0.9" fill="#3a3ad0"/>
<text x="342.05" y="179.60" font-size="3" fill="#a89088" text-anchor="middle">1</text>
<text x="342.05" y="283.00" font-size="3" fill="#a89088" text-anchor="middle">1</text>
<circle cx="380.40" cy="155.60" r="0.9" fill="#3a3ad0"/>
<circle cx="379.70" cy="182.60" r="0.9" fill="#3a3ad0"/>
<circle cx="379.70" cy="284.70" r="0.9" fill="#3a3ad0"/>
<circle cx="379.30" cy="326.10" r="0.9" fill="#3a3ad0"/>
<text x="379.70" y="179.60" font-size="3" fill="#a89088" text-anchor="middle">1</text>
<text x="379.70" y="283.00" font-size="3" fill="#a89088" text-anchor="middle">1</text>
<circle cx="416.90" cy="156.70" r="0.9" fill="#3a3ad0"/>
<circle cx="417.35" cy="182.60" r="0.9" fill="#3a3ad0"/>
<circle cx="417.35" cy="284.70" r="0.9" fill="#3a3ad0"/>
<circle cx="415.60" cy="324.90" r="0.9" fill="#3a3ad0"/>
<text x="417.35" y="179.60" font-size="3" fill="#a89088" text-anchor="middle">1</text>
<text x="417.35" y="283.00" font-size="3" fill="#a89088" text-anchor="middle">1</text>
<circle cx="454.50" cy="156.70" r="0.9" fill="#3a3ad0"/>
<circle cx="455.00" cy="182.60" r="0.9" fill="#3a3ad0"/>
<circle cx="455.00" cy="284.70" r="0.9" fill="#3a3ad0"/>
<circle cx="454.80" cy="322.50" r="0.9" fill="#3a3ad0"/>
<text x="455.00" y="179.60" font-size="3" fill="#a89088" text-anchor="middle">1</text>
<text x="455.00" y="283.00" font-size="3" fill="#a89088" text-anchor="middle">1</text>
<circle cx="490.80" cy="158.00" r="0.9" fill="#3a3ad0"/>
<circle cx="492.65" cy="182.60" r="0.9" fill="#3a3ad0"/>
<circle cx="492.65" cy="284.70" r="0.9" fill="#3a3ad0"/>
<circle cx="490.50" cy="320.30" r="0.9" fill="#3a3ad0"/>
<text x="492.65" y="179.60" font-size="3" fill="#a89088" text-anchor="middle">1</text>
<text x="492.65" y="283.00" font-size="3" fill="#a89088" text-anchor="middle">1</text>
<circle cx="528.30" cy="159.00" r="0.9" fill="#3a3ad0"/>
<circle cx="530.30" cy="182.60" r="0.9" fill="#3a3ad0"/>
<circle cx="530.30" cy="284.70" r="0.9" fill="#3a3ad0"/>
<circle cx="528.50" cy="321.30" r="0.9" fill="#3a3ad0"/>
<text x="530.30" y="179.60" font-size="3" fill="#a89088" text-anchor="middle">1</text>
<text x="530.30" y="283.00" font-size="3" fill="#a89088" text-anchor="middle">1</text>
</g>
<rect x="527" y="44" width="7.5" height="355" fill="#fafafa" />
<rect x="17" y="391" width="517.5" height="7.6" fill="#fafafa" />
<rect x="534.3" y="44" width="0.5" height="355" fill="#d4d4d4" />
<rect x="529.2" y="107" width="2.9" height="126" fill="#c0c0c0" rx="1.45"/>
<rect x="158" y="393.5" width="183.8" height="3" fill="#c0c0c0" rx="1.5"/>
<rect x="0" y="44" width="17" height="355" fill="#ececec" />
<rect x="1.8" y="44" width="11.8" height="355" fill="url(#gV)" />
<rect x="16.5" y="44" width="0.5" height="355" fill="#c8c8c8" />
<rect x="534.8" y="44" width="21" height="355" fill="#ececec" />
<rect x="536.2" y="44" width="15.6" height="355" fill="url(#gV)" />
<rect x="551.8" y="44" width="0.5" height="355" fill="#d6d6d6" />
<circle cx="553.4" cy="221.2" r="0.8" fill="#c4c4c4"/>
<line x1="18.8" y1="12.8" x2="18.8" y2="23.2" stroke="#bdbdbd" stroke-width="0.6" />
<line x1="37.6" y1="12.8" x2="37.6" y2="23.2" stroke="#bdbdbd" stroke-width="0.6" />
<line x1="72" y1="12.8" x2="72" y2="23.2" stroke="#bdbdbd" stroke-width="0.6" />
<line x1="106" y1="12.8" x2="106" y2="23.2" stroke="#bdbdbd" stroke-width="0.6" />
<line x1="141" y1="12.8" x2="141" y2="23.2" stroke="#bdbdbd" stroke-width="0.6" />
<line x1="206.4" y1="12.8" x2="206.4" y2="23.2" stroke="#bdbdbd" stroke-width="0.6" />
<line x1="224.4" y1="12.8" x2="224.4" y2="23.2" stroke="#bdbdbd" stroke-width="0.6" />
<line x1="258.3" y1="12.8" x2="258.3" y2="23.2" stroke="#bdbdbd" stroke-width="0.6" />
<line x1="335.4" y1="12.8" x2="335.4" y2="23.2" stroke="#bdbdbd" stroke-width="0.6" />
<line x1="369.4" y1="12.8" x2="369.4" y2="23.2" stroke="#bdbdbd" stroke-width="0.6" />
<line x1="388.8" y1="12.8" x2="388.8" y2="23.2" stroke="#bdbdbd" stroke-width="0.6" />
<path d="M4 22.3 V18.8 L6.2 15.6 H10.8 L13 18.8 V22.3 Z" fill="#f3f3f3" stroke="#dadada" stroke-width=".4"/><path d="M4 18.9 H6.6 L7.4 20 H9.6 L10.4 18.9 H13" fill="none" stroke="#d4d4d4" stroke-width=".4"/><path d="M7.3 12.9 h2.4 v2.8 h1.3 l-2.5 2.5 l-2.5 -2.5 h1.3z" fill="#e4ecb4"/>
<path d="M23 13.1 H29.6 L33 16.6 V23.6 H23 Z" fill="#fdfdfd" stroke="#6a6a6a" stroke-width=".45"/><path d="M29.6 13.1 V16.6 H33 Z" fill="#dedede" stroke="#6a6a6a" stroke-width=".4"/><path d="M23.6 20.4 H32.4 M25.8 13.8 V23 M23.6 22.2 H32.4" stroke="#3a3a3a" stroke-width=".45" fill="none"/><rect x="28.4" y="21.3" width="3.2" height="1.4" fill="#8a8a8a"/>
<rect x="42.2" y="15.4" width="9.6" height="6" rx=".8" fill="#fafafa" stroke="#8a8a8a" stroke-width=".5"/>
<circle cx="43.8" cy="14.2" r="1.05" fill="#2fa62f"/>
<circle cx="47" cy="14.2" r="1.05" fill="#2fa62f"/>
<circle cx="50.2" cy="14.2" r="1.05" fill="#2fa62f"/>
<circle cx="43.8" cy="22.6" r="1.05" fill="#2fa62f"/>
<circle cx="47" cy="22.6" r="1.05" fill="#2fa62f"/>
<circle cx="50.2" cy="22.6" r="1.05" fill="#2fa62f"/>
<path d="M44.6 21.6 L50.4 14.2" stroke="#1c1c1c" stroke-width="2" stroke-linecap="round"/><circle cx="50.8" cy="13.8" r=".9" fill="#e880c8"/><circle cx="44.3" cy="21.9" r=".8" fill="#e8d858"/>
<rect x="57.8" y="16" width="9.6" height="5.6" rx=".8" fill="#fafafa" stroke="#8a8a8a" stroke-width=".5"/>
<circle cx="59.4" cy="22.6" r="1.05" fill="#2fa62f"/>
<circle cx="62.5" cy="22.6" r="1.05" fill="#2fa62f"/>
<circle cx="65.7" cy="22.6" r="1.05" fill="#2fa62f"/>
<circle cx="65.9" cy="14.4" r="1.05" fill="#2fa62f"/>
<circle cx="61.6" cy="16.2" r="2.9" fill="#a9cdf0" stroke="#5f7f9f" stroke-width=".6"/><path d="M63.8 18.5 L66.8 21.6" stroke="#333" stroke-width="1.2" stroke-linecap="round"/>
<path transform="translate(76 13.4)" d="M0 3.5 L4 0 V2.2 C8 2.1 9.6 4.6 9.1 7.2 C8.7 8.8 7 9.3 5 9 C6.7 8.2 7 6.6 6.2 5.6 C5.6 4.9 4.8 4.7 4 4.7 V6.9 Z" fill="#f3d94a" stroke="#e6c432" stroke-width=".35"/>
<path transform="translate(101.2 13.4) scale(-1 1)" d="M0 3.5 L4 0 V2.2 C8 2.1 9.6 4.6 9.1 7.2 C8.7 8.8 7 9.3 5 9 C6.7 8.2 7 6.6 6.2 5.6 C5.6 4.9 4.8 4.7 4 4.7 V6.9 Z" fill="#cdeeb8" stroke="#c0e6aa" stroke-width=".4"/>
<rect x="112.4" y="13.6" width="6.2" height="4.4" fill="#fdfdfd" stroke="#8a8a8a" stroke-width=".4"/><rect x="110.7" y="17.2" width="9.6" height="4.9" rx=".8" fill="#d9d9d9" stroke="#6e6e6e" stroke-width=".5"/><rect x="112.3" y="18.2" width="6.4" height="1.5" fill="#2c2c2c"/><rect x="111.4" y="22" width="8.2" height=".8" fill="#555"/>
<rect x="125" y="13.2" width="11.8" height="2.6" rx=".6" fill="#8d8752" stroke="#5f5a30" stroke-width=".4"/><rect x="125.9" y="15.8" width="1.7" height="7.7" fill="#2f4a7a"/><rect x="134.2" y="15.8" width="1.7" height="7.7" fill="#2f4a7a"/><rect x="125.4" y="23" width="2.7" height=".9" fill="#22365a"/><rect x="133.7" y="23" width="2.7" height=".9" fill="#22365a"/><rect x="128.5" y="15.8" width="5" height="6.6" fill="#fbfbfb" stroke="#bbb" stroke-width=".3"/><path d="M129.6 17.6 h2.4 M129.6 19 h1.4 M130.2 20.4 l1.6 .8" stroke="#e04a4a" stroke-width=".5"/>
<circle cx="149.1" cy="16.5" r="3.2" fill="#ececec" stroke="#3d3d3d" stroke-width=".9"/>
<path d="M151.40 18.80 L155 22.2" stroke="#3d3d3d" stroke-width="1.3" stroke-linecap="round"/>
<path d="M147.5 16.5 h3.2 M149.1 14.9 v3.2" stroke="#3d3d3d" stroke-width=".8"/>
<circle cx="164.2" cy="16.5" r="3.2" fill="#ececec" stroke="#3d3d3d" stroke-width=".9"/>
<path d="M166.50 18.80 L170 22.2" stroke="#3d3d3d" stroke-width="1.3" stroke-linecap="round"/>
<path d="M162.6 16.5 h3.2" stroke="#3d3d3d" stroke-width=".8"/>
<path d="M181.9 21.5 A3.7 3.7 0 1 1 183.7 18.0" fill="none" stroke="#2d2d2d" stroke-width="1.2"/><path d="M181.4 17.4 H185.9 L183.6 20.6 Z" fill="#2d2d2d"/>
<path d="M191 23 V18.2 C191 16.2 192.2 15.4 193.4 15.4" fill="none" stroke="#3d3d3d" stroke-width=".9"/><path d="M195 19.6 V23" stroke="#3d3d3d" stroke-width=".9"/>
<circle cx="195" cy="16.2" r="3.1" fill="#ececec" stroke="#3d3d3d" stroke-width=".9"/>
<path d="M197.23 18.43 L199.7 21.8" stroke="#3d3d3d" stroke-width="1.3" stroke-linecap="round"/>
<rect x="210" y="13" width="10" height="10" fill="#bdbdbd"/><rect x="209.4" y="12.4" width="10" height="10" fill="#f6f6f6" stroke="#b4b4b4" stroke-width=".4"/><circle cx="214" cy="16.6" r="3" fill="#a9cdf0" stroke="#7f9fc4" stroke-width=".7"/><path d="M216.2 18.9 L218.7 21.6" stroke="#8e8e8e" stroke-width="1.1" stroke-linecap="round"/>
<path d="M229 19.4 V14.6 L231 13 H238.6 V19.4 Z" fill="#fbfbfb" stroke="#c4c4c4" stroke-width=".4"/><path d="M230.2 14.2 L238 18.4" stroke="#e04a4a" stroke-width=".6"/><path d="M230.4 18.2 L236 13.8" stroke="#4ab04a" stroke-width=".6"/><rect x="228" y="19.2" width="12.2" height="4.4" fill="#3f9e3f"/>
<text x="234.1" y="23" font-size="3.9" fill="#fff" textLength="9" lengthAdjust="spacingAndGlyphs" text-anchor="middle" font-weight="bold">NET</text>
<path d="M245.2 15.5 l2 1.6 M252 15.2 l-2 1.8 M244.6 19 h2.2 M252.6 19 h-2.2 M245.2 22.6 l2 -1.6 M252 22.8 l-2 -1.8" stroke="#333" stroke-width=".5"/><circle cx="248.6" cy="14.9" r="1.6" fill="#1c1c1c"/><ellipse cx="248.6" cy="19" rx="3.1" ry="3.7" fill="#cc2222"/><path d="M248.6 15.4 V22.6" stroke="#3a0c0c" stroke-width=".5"/><circle cx="247.2" cy="18" r=".7" fill="#2a0808"/><circle cx="250" cy="20.6" r=".7" fill="#2a0808"/><circle cx="247.4" cy="21" r=".6" fill="#2a0808"/><path d="M248.4 17.8 L250.2 20 L254 14.4" fill="none" stroke="#2aa42a" stroke-width="1.5"/>
<rect x="262.4" y="13.4" width="45" height="9" fill="#fff" rx="1.3" stroke="#c9c9c9" stroke-width=".5"/>
<rect x="264.6" y="15" width="6.1" height="5.8" fill="#8a1a0c" />
<text x="273" y="20.1" font-size="5.8" fill="#222" textLength="31.8" lengthAdjust="spacingAndGlyphs">F.Cu (PgUp)</text>
<rect x="309.5" y="13.4" width="7.6" height="9" fill="#fff" rx="1.3" stroke="#c9c9c9" stroke-width=".5"/>
<path d="M311.7 17.2 L313.3 18.9 L314.9 17.2" fill="none" stroke="#444" stroke-width=".7"/>
<rect x="320.6" y="12.8" width="10.9" height="10.4" fill="#8e1c12" />
<rect x="320.6" y="16.3" width="10.9" height="1.6" fill="#3c9c3c" />
<path d="M324.2 18.4 A2.1 2.1 0 1 1 327.6 19.2" fill="none" stroke="#f4f4f4" stroke-width=".9"/><path d="M326.4 18.2 l2.2 .4 l-1.2 1.8z" fill="#f4f4f4"/>
<rect x="339.4" y="14.9" width="11" height="6.4" rx="1.2" fill="#f4f4f4" stroke="#9a9a9a" stroke-width=".5"/><path d="M342 13.6 V22.6 M345 13.6 V22.6 M348 13.6 V22.6 M339.6 17 H350.2 M339.6 19.2 H350.2" stroke="#9c9c9c" stroke-width=".5"/>
<circle cx="342" cy="14.2" r="1.15" fill="#2fa62f"/>
<circle cx="345" cy="14.2" r="1.15" fill="#2fa62f"/>
<circle cx="348" cy="14.2" r="1.15" fill="#2fa62f"/>
<circle cx="342" cy="22.1" r="1.15" fill="#2fa62f"/>
<circle cx="345" cy="22.1" r="1.15" fill="#2fa62f"/>
<circle cx="348" cy="22.1" r="1.15" fill="#2fa62f"/>
<path d="M354.5 15.6 H365.6 M354.5 20.4 H365.6" stroke="#35a535" stroke-width="1.1"/><path d="M357.6 12.9 V23.2 M362.5 12.9 V23.2" stroke="#e03a28" stroke-width="1.1"/>
<circle cx="357.6" cy="15.6" r=".7" fill="#f4f4f4"/>
<circle cx="357.6" cy="20.4" r=".7" fill="#f4f4f4"/>
<circle cx="362.5" cy="15.6" r=".7" fill="#f4f4f4"/>
<circle cx="362.5" cy="20.4" r=".7" fill="#f4f4f4"/>
<path d="M379 12 L384.8 17.8 L379 23.6 L373.2 17.8 Z" fill="#f2b81c" stroke="#7a5c10" stroke-width=".5"/><path d="M377.6 15.4 V20.4 M380.4 15.4 V20.4" stroke="#1c1c1c" stroke-width=".8"/><path d="M376.5 16.6 L377.6 15 L378.7 16.6 Z M379.3 19.2 L380.4 20.8 L381.5 19.2 Z" fill="#1c1c1c"/>
<rect x="392.7" y="12.6" width="11.3" height="10.3" rx="1.2" fill="#4a4a4a" stroke="#7a7a7a" stroke-width=".5"/><rect x="394" y="14" width="8.6" height="7" fill="#1e1e1e"/><path d="M395.4 15.6 L397.6 17.2 L395.4 18.8 M398 19.2 H400.6" fill="none" stroke="#35c035" stroke-width=".8"/>
<rect x="2.1" y="31.1" width="102.7" height="8.5" fill="#fff" rx="1.4" stroke="#cdcdcd" stroke-width=".4"/>
<path d="M97.5 31.1 H103.39999999999999 A1.4 1.4 0 0 1 104.8 32.5 V38.3 A1.4 1.4 0 0 1 103.39999999999999 39.7 H97.5 Z" fill="url(#gBlue)"/>
<path d="M99.85 34.4 L101.14999999999999 33 L102.44999999999999 34.4 M99.85 36.4 L101.14999999999999 37.8 L102.44999999999999 36.4" fill="none" stroke="#fff" stroke-width=".7"/>
<text x="5.3" y="37.2" font-size="6.1" fill="#262626" textLength="80.8" lengthAdjust="spacingAndGlyphs">Track: 2.500 mm (98.43 mils)</text>
<rect x="106.7" y="31.1" width="151" height="8.5" fill="#fff" rx="1.4" stroke="#cdcdcd" stroke-width=".4"/>
<path d="M250.39999999999998 31.1 H256.3 A1.4 1.4 0 0 1 257.7 32.5 V38.3 A1.4 1.4 0 0 1 256.3 39.7 H250.39999999999998 Z" fill="url(#gBlue)"/>
<path d="M252.74999999999997 34.4 L254.04999999999998 33 L255.35 34.4 M252.74999999999997 36.4 L254.04999999999998 37.8 L255.35 36.4" fill="none" stroke="#fff" stroke-width=".7"/>
<text x="109.8" y="37.2" font-size="6.1" fill="#262626" textLength="130.4" lengthAdjust="spacingAndGlyphs">Via: 0.60 mm (23.6 mils)/ 0.40 mm (15.7 mils) *</text>
<rect x="281.7" y="31.1" width="106.2" height="8.5" fill="#fff" rx="1.4" stroke="#cdcdcd" stroke-width=".4"/>
<path d="M380.59999999999997 31.1 H386.5 A1.4 1.4 0 0 1 387.9 32.5 V38.3 A1.4 1.4 0 0 1 386.5 39.7 H380.59999999999997 Z" fill="url(#gBlue)"/>
<path d="M382.95 34.4 L384.25 33 L385.55 34.4 M382.95 36.4 L384.25 37.8 L385.55 36.4" fill="none" stroke="#fff" stroke-width=".7"/>
<text x="285.3" y="37.2" font-size="6.1" fill="#262626" textLength="81.6" lengthAdjust="spacingAndGlyphs">Grid: 0.5000 mm (19.69 mils)</text>
<rect x="393.5" y="31.1" width="61.3" height="8.5" fill="#fff" rx="1.4" stroke="#cdcdcd" stroke-width=".4"/>
<path d="M447.5 31.1 H453.40000000000003 A1.4 1.4 0 0 1 454.8 32.5 V38.3 A1.4 1.4 0 0 1 453.40000000000003 39.7 H447.5 Z" fill="url(#gBlue)"/>
<path d="M449.85 34.4 L451.15000000000003 33 L452.45000000000005 34.4 M449.85 36.4 L451.15000000000003 37.8 L452.45000000000005 36.4" fill="none" stroke="#fff" stroke-width=".7"/>
<text x="397" y="37.2" font-size="6.1" fill="#262626" textLength="29.4" lengthAdjust="spacingAndGlyphs">Zoom Auto</text>
<line x1="261.3" y1="30" x2="261.3" y2="41" stroke="#bdbdbd" stroke-width="0.6" />
<line x1="279" y1="30" x2="279" y2="41" stroke="#bdbdbd" stroke-width="0.6" />
<rect x="264.4" y="33.2" width="11.8" height="1.9" fill="#d8432f"/><path d="M264.4 37 H276.2 V38.9 H271.6 V40.8 H269 V38.9 H264.4 Z" fill="#3aa63a"/><path d="M270.3 29.6 V32.6 M269.2 31.6 L270.3 32.9 L271.4 31.6" fill="none" stroke="#333" stroke-width=".5"/><path d="M266.4 40.4 h2 M272.4 40.4 h2" stroke="#333" stroke-width=".5"/><path d="M270.3 35.2 V36.9" stroke="#333" stroke-width=".5"/>
<path d="M4.6 49.4 l2 1.8 M12.6 49 l-2 1.8 M3.6 53 h2 M13.4 53 h-2 M12.6 57.2 l-1.8 -1.6" stroke="#222" stroke-width=".55"/><circle cx="9" cy="49" r="1.5" fill="#161616"/><ellipse cx="8.7" cy="53" rx="3.1" ry="3.6" fill="#1c1c1c"/><circle cx="5.3" cy="54.6" r="2.9" fill="rgba(255,255,255,.55)" stroke="#d62323" stroke-width="1.1"/><path d="M3.3 56.6 L7.3 52.6" stroke="#d62323" stroke-width="1"/>
<rect x="1" y="60.8" width="13.6" height="13.8" fill="#e7f0fb" rx="1" stroke="#d2deef" stroke-width="0.5"/>
<circle cx="3.7" cy="64.3" r=".75" fill="#4b5b7a"/>
<circle cx="6.3" cy="64.3" r=".75" fill="#4b5b7a"/>
<circle cx="8.9" cy="64.3" r=".75" fill="#4b5b7a"/>
<circle cx="11.5" cy="64.3" r=".75" fill="#4b5b7a"/>
<circle cx="3.7" cy="66.9" r=".75" fill="#4b5b7a"/>
<circle cx="6.3" cy="66.9" r=".75" fill="#4b5b7a"/>
<circle cx="8.9" cy="66.9" r=".75" fill="#4b5b7a"/>
<circle cx="11.5" cy="66.9" r=".75" fill="#4b5b7a"/>
<circle cx="3.7" cy="69.5" r=".75" fill="#4b5b7a"/>
<circle cx="6.3" cy="69.5" r=".75" fill="#4b5b7a"/>
<circle cx="8.9" cy="69.5" r=".75" fill="#4b5b7a"/>
<circle cx="11.5" cy="69.5" r=".75" fill="#4b5b7a"/>
<circle cx="3.7" cy="72.1" r=".75" fill="#4b5b7a"/>
<circle cx="6.3" cy="72.1" r=".75" fill="#4b5b7a"/>
<circle cx="8.9" cy="72.1" r=".75" fill="#4b5b7a"/>
<circle cx="11.5" cy="72.1" r=".75" fill="#4b5b7a"/>
<path d="M3.6 80 V88.2 H12.6" fill="none" stroke="#2a2a2a" stroke-width=".7"/><path d="M2.6 81.4 L3.6 79.6 L4.6 81.4 M11.2 87.2 L13 88.2 L11.2 89.2" fill="none" stroke="#2a2a2a" stroke-width=".6"/><path d="M3.6 88.2 L11.4 80.4" stroke="#2a2a2a" stroke-width=".7" stroke-dasharray="1.4 .8"/><path d="M8.2 88.2 A4.6 4.6 0 0 0 6.9 85" fill="none" stroke="#555" stroke-width=".5"/><circle cx="11.7" cy="80" r="1.15" fill="#e0422a"/>
<text x="5.6" y="83.2" font-size="4" fill="#333">r</text>
<text x="7.5" y="99.6" font-size="7" fill="#2a2a2a" text-anchor="middle" font-weight="bold">In</text>
<path d="M2.6 101.8 H12.4" stroke="#1e1e1e" stroke-width=".7"/><path d="M4.6 100.6 L2.6 101.8 L4.6 103.0 Z M10.4 100.6 L12.4 101.8 L10.4 103.0 Z" fill="#1e1e1e"/>
<rect x="1" y="106.7" width="13.6" height="13" fill="#e7f0fb" rx="1" stroke="#d2deef" stroke-width="0.5"/>
<text x="7.6" y="114.4" font-size="6.4" fill="#2a2a2a" textLength="10.6" lengthAdjust="spacingAndGlyphs" text-anchor="middle" font-weight="bold">mm</text>
<path d="M2.6 116.8 H12.4" stroke="#1e1e1e" stroke-width=".7"/><path d="M4.6 115.6 L2.6 116.8 L4.6 118.0 Z M10.4 115.6 L12.4 116.8 L10.4 118.0 Z" fill="#1e1e1e"/>
<path d="M2.4 127.6 H12.6 M6 123.4 V131.6" stroke="#4a4a4a" stroke-width=".7"/><path d="M7.2 128.4 V134.6 L8.7 133.2 L9.8 135.6 L10.8 135.1 L9.8 132.8 L11.8 132.7 Z" fill="#f6f6f6" stroke="#8a8a8a" stroke-width=".5"/>
<line x1="2.5" y1="138.5" x2="12.5" y2="138.5" stroke="#cdcdcd" stroke-width="0.5" />
<rect x="1" y="140.4" width="13.6" height="13.6" fill="#e7f0fb" rx="1" stroke="#d2deef" stroke-width="0.5"/>
<rect x="3" y="142.8" width="9.4" height="9.6" fill="#d9d9d9"/><path d="M4.2 144.6 L10.8 145.4 L4.8 151.2 L10.3 150.4 L4.2 144.6" fill="none" stroke="#fafafa" stroke-width=".7"/>
<circle cx="4.2" cy="144.6" r="1.25" fill="#c6d02c"/>
<circle cx="10.8" cy="145.4" r="1.25" fill="#c6d02c"/>
<circle cx="4.8" cy="151.2" r="1.25" fill="#c6d02c"/>
<circle cx="10.3" cy="150.4" r="1.25" fill="#c6d02c"/>
<rect x="1" y="156.3" width="13.6" height="13.3" fill="#e7f0fb" rx="1" stroke="#d2deef" stroke-width="0.5"/>
<rect x="3.3" y="159.8" width="8.2" height="6.6" fill="#e9a57a"/><path d="M3.3 161.4 h8.2 M3.3 163.1 h8.2 M3.3 164.8 h8.2" stroke="#f4f4f4" stroke-width=".5"/><rect x="4.7" y="159" width="5.4" height="8.2" rx=".6" fill="#ededed" stroke="#3a3a3a" stroke-width=".7"/><rect x="5.9" y="160.4" width="3" height="5.4" fill="#d4d4d4"/>
<line x1="2.5" y1="172.2" x2="12.5" y2="172.2" stroke="#cdcdcd" stroke-width="0.5" />
<rect x="1" y="174.6" width="13.6" height="14" fill="#e7f0fb" rx="1" stroke="#d2deef" stroke-width="0.5"/>
<path d="M2.5 179.8 V181.7 A4.9 4.9 0 0 0 12.3 181.7 V179.8" fill="none" stroke="#2c8c2c" stroke-width="1.9"/><path d="M5.2 176.6 L9.4 180.4 M9.4 176.6 L5.2 180.4" stroke="#e02424" stroke-width="1.2"/>
<line x1="2.5" y1="190.3" x2="12.5" y2="190.3" stroke="#cdcdcd" stroke-width="0.5" />
<rect x="1.6" y="195.4" width="11.4" height="12.2" fill="#3f9b3f" />
<path d="M1.6 199 L5 195.4 M1.6 203 L9 195.4 M1.6 207 L13 195.6 M5.5 207.6 L13 200 M9.5 207.6 L13 204" stroke="#58ad58" stroke-width=".5"/>
<circle cx="5.0" cy="199.4" r="1.3" fill="none" stroke="#f2f2f2" stroke-width="0.9"/><path d="M6.300000000000001 199.0 H8.2 L11.2 205.4" fill="none" stroke="#f2f2f2" stroke-width="0.9"/>
<rect x="1" y="209" width="13.6" height="14.7" fill="#e7f0fb" rx="1" stroke="#d2deef" stroke-width="0.5"/>
<rect x="2.6" y="211" width="10" height="11" fill="#fcfcfc" stroke="#6ab46a" stroke-width=".6"/>
<circle cx="5.2" cy="215" r="1.3" fill="none" stroke="#2c8c2c" stroke-width="0.9"/><path d="M6.5 214.6 H8.4 L11.4 221" fill="none" stroke="#2c8c2c" stroke-width="0.9"/>
<rect x="1.8" y="226" width="11" height="12" fill="#bcdcbc" stroke="#58a858" stroke-width=".6"/>
<path d="M1.8 230 L5.6 226 M1.8 234 L9.6 226 M1.8 238 L12.8 226.4 M5.8 238 L12.8 230.4 M9.8 238 L12.8 234.6" stroke="#8cc48c" stroke-width=".5"/>
<circle cx="5.2" cy="230.2" r="1.3" fill="none" stroke="#3f9b3f" stroke-width="1.1"/><path d="M6.5 229.79999999999998 H8.4 L11.4 236.2" fill="none" stroke="#3f9b3f" stroke-width="1.1"/>
<line x1="2.5" y1="241.8" x2="12.5" y2="241.8" stroke="#cdcdcd" stroke-width="0.5" />
<path d="M2.6 256 L12 246.4" stroke="#b4b4b4" stroke-width=".5" stroke-dasharray="1.2 .8"/><circle cx="7.2" cy="251.2" r="3.9" fill="#cfe6cf" stroke="#3f9b3f" stroke-width="1.5"/><circle cx="7.2" cy="251.2" r="1.4" fill="#f2f2f2" stroke="#3f9b3f" stroke-width=".6"/>
<rect x="1" y="258.5" width="13.6" height="14.5" fill="#e7f0fb" rx="1" stroke="#d2deef" stroke-width="0.5"/>
<path d="M2.6 271.6 L12.6 260.6" stroke="#a8a8a8" stroke-width=".5"/><path d="M2.8 261.2 L7 265.6" stroke="#2aa42a" stroke-width="2.2" stroke-linecap="round"/><path d="M8.4 267 L12.4 271.4" stroke="#e2341f" stroke-width="2.2" stroke-linecap="round"/><circle cx="7.6" cy="266.2" r="2.3" fill="#cfcfcf" stroke="#8c8c8c" stroke-width=".5"/><circle cx="8.3" cy="266.6" r=".8" fill="#e6c43a"/>
<path d="M2.4 287 L12.6 276.4" stroke="#b4b4b4" stroke-width=".5"/><path d="M6.1 276.2 V284" stroke="#e2341f" stroke-width="1.9"/><path d="M1.8 283.6 H8.4" stroke="#2aa42a" stroke-width="1.9"/><path d="M8.6 282.6 H13 M8.6 284.6 H13" stroke="#4ab04a" stroke-width=".5"/><path d="M5.2 284.8 V287.4 M7 284.8 V287.4" stroke="#e66a5a" stroke-width=".5"/>
<path d="M1.8 292 L5 296.4 H9 L12.6 301.6" fill="none" stroke="#2aa42a" stroke-width="1.5"/><path d="M5.2 291.6 L7 294 H10.4 M2 299.6 H5.4 L7 301.8" fill="none" stroke="#e2341f" stroke-width="1.3"/><path d="M2 301.4 L12.4 291.4" stroke="#b4b4b4" stroke-width=".5"/><path d="M9.6 298.6 L12.8 298.8" stroke="#2aa42a" stroke-width="1"/>
<rect x="1" y="308.5" width="13.6" height="13" fill="#e7f0fb" rx="1" stroke="#d2deef" stroke-width="0.5"/>
<path d="M2.4 314 L7 310 H12.8 V314 Z" fill="#35a535"/><rect x="2.4" y="314.4" width="10.4" height="1.6" fill="#e2341f"/><path d="M2.4 317.4 C3.4 316 5.4 316 6.4 317.4 L6.4 318 H2.4 Z" fill="#2848d8"/><rect x="10.6" y="316.2" width="2.2" height="1.6" fill="#2848d8"/><path d="M3 320.6 C4 318.2 9 318.2 10.4 320.6 Z" fill="#e6bc28"/><path d="M7 314.4 L10.8 318.6" stroke="#f6f6f6" stroke-width="1.6" stroke-linecap="round"/><circle cx="6.7" cy="313.8" r="1.5" fill="none" stroke="#f6f6f6" stroke-width="1"/>
<path d="M2.6 333 V328.6 Q2.6 326.4 4.2 326.4 Q5.8 326.4 5.8 328.6 V331 M8.6 331.6 V328.6 Q8.6 326.4 10.2 326.4 Q11.8 326.4 11.8 328.6 V333" fill="none" stroke="#d82a2a" stroke-width="1.3"/><path d="M2 334.6 C3 333.6 4 333.6 5 334.6" fill="none" stroke="#d82a2a" stroke-width=".8"/><path d="M6.8 329.8 L12.4 335.4" stroke="#9a9a9a" stroke-width="2.4" stroke-linecap="round"/><path d="M6.8 329.8 L12.4 335.4" stroke="#f8f8f8" stroke-width="1.6" stroke-linecap="round"/><circle cx="6.2" cy="329.2" r="1.5" fill="none" stroke="#f2f2f2" stroke-width="1"/>
<line x1="2.5" y1="339.2" x2="12.5" y2="339.2" stroke="#cdcdcd" stroke-width="0.5" />
<rect x="536" y="46.3" width="14.3" height="13.7" fill="#e7f0fb" rx="1" stroke="#d2deef" stroke-width="0.5"/>
<path transform="translate(540.4 48.8) scale(1)" d="M0 0 V7.6 L1.9 5.9 L3.2 8.8 L4.4 8.3 L3.1 5.5 L5.7 5.4 Z" fill="#f6f6f6" stroke="#6a6a6a" stroke-width=".6"/>
<line x1="538" y1="63" x2="549" y2="63" stroke="#cdcdcd" stroke-width="0.5" />
<rect x="540.1" y="67.4" width="1.6" height="10.6" fill="#e2442f" />
<rect x="538.4" y="69.6" width="10.6" height="1.5" fill="#30b430" />
<path d="M544.6 67.6 V72.4" stroke="#b4b4b4" stroke-width=".6"/>
<path transform="translate(543.6 71) scale(0.8)" d="M0 0 V7.6 L1.9 5.9 L3.2 8.8 L4.4 8.3 L3.1 5.5 L5.7 5.4 Z" fill="#eeeeee" stroke="#5a5a5a" stroke-width=".6"/>
<rect x="538.4" y="82.4" width="10.4" height="10.8" fill="#dadada" />
<path d="M541.6 85.8 L538.6 82.6 M541.6 85.8 L548.6 82.8 M541.6 85.8 L538.6 90 M541.6 85.8 L545 93" stroke="#f6f6f6" stroke-width=".6"/><circle cx="541.6" cy="85.8" r="1.1" fill="#c4c42a"/>
<path transform="translate(543 86.2) scale(0.8)" d="M0 0 V7.6 L1.9 5.9 L3.2 8.8 L4.4 8.3 L3.1 5.5 L5.7 5.4 Z" fill="#f4f4f4" stroke="#6a6a6a" stroke-width=".6"/>
<line x1="538" y1="97" x2="549" y2="97" stroke="#cdcdcd" stroke-width="0.5" />
<rect x="538.2" y="103.2" width="10.4" height="6.8" rx="1.6" fill="#fdfdfd" stroke="#8a8a8a" stroke-width=".5"/>
<circle cx="540.5" cy="102.5" r="1.3" fill="#2fa82f"/>
<circle cx="543.4" cy="102.5" r="1.3" fill="#2fa82f"/>
<circle cx="546.3" cy="102.5" r="1.3" fill="#2fa82f"/>
<circle cx="540.5" cy="110.7" r="1.3" fill="#2fa82f"/>
<circle cx="543.4" cy="110.7" r="1.3" fill="#2fa82f"/>
<circle cx="546.3" cy="110.7" r="1.3" fill="#2fa82f"/>
<path d="M538.6 117.8 L541 121.6 H545 L548.4 126.8" fill="none" stroke="#2a9a2a" stroke-width="1.5"/>
<rect x="537.2" y="131.5" width="12.4" height="11.6" fill="#4ba24b" />
<path d="M537.2 135 L540.6 131.5 M537.2 139 L544.6 131.5 M537.2 143 L548.6 131.5 M541.4 143.1 L549.6 135 M545.4 143.1 L549.6 139" stroke="#66b466" stroke-width=".5"/><circle cx="541.2" cy="136.2" r="1.7" fill="none" stroke="#e4e4e4" stroke-width="1.1"/><path d="M542.8 135.6 H544.6 L547.6 141.4" fill="none" stroke="#d4d4d4" stroke-width="1.3"/>
<rect x="537.8" y="146.9" width="11.2" height="10.4" fill="#e8e8e8" stroke="#4ba24b" stroke-width="1.2"/>
<circle cx="543.4" cy="152.1" r="2.9" fill="#f4f4f4" stroke="#d83a34" stroke-width="1.1"/><path d="M541.4 154.1 L545.4 150.1" stroke="#d83a34" stroke-width="1"/>
<line x1="538" y1="160.8" x2="549" y2="160.8" stroke="#cdcdcd" stroke-width="0.5" />
<path d="M538.7 176.4 L549 166.6" stroke="#2a4ad8" stroke-width="1.3" stroke-dasharray="1.9 .9"/>
<circle cx="543.8" cy="186.2" r="4.6" fill="none" stroke="#2a4ad8" stroke-width="1.2"/><circle cx="543.8" cy="186.2" r=".9" fill="#3aa83a"/><circle cx="547.3" cy="182.7" r=".9" fill="#3aa83a"/>
<path d="M539.4 197.2 A8 8 0 0 1 547.4 205.2" fill="none" stroke="#2a4ad8" stroke-width="1.3"/><circle cx="539.4" cy="197.2" r=".95" fill="#3aa83a"/><circle cx="547.4" cy="205.2" r=".95" fill="#3aa83a"/><circle cx="539.4" cy="205.2" r=".95" fill="#3aa83a"/>
<text class="serif" x="543.4" y="221.3" font-size="12.6" fill="#1c1c1c" text-anchor="middle">T</text>
<line x1="538" y1="225.5" x2="549" y2="225.5" stroke="#cdcdcd" stroke-width="0.5" />
<text x="543.4" y="235" font-size="4.6" fill="#2a2a2a" text-anchor="middle">N</text>
<path d="M538.4 235.4 V240.8 M548.6 235.4 V240.8 M538.4 238.2 H548.6" stroke="#1e1e1e" stroke-width=".7"/><path d="M540.4 237.1 L538.6 238.2 L540.4 239.3 Z M546.6 237.1 L548.4 238.2 L546.6 239.3 Z" fill="#1e1e1e"/>
<path d="M543.5 246.4 L548.1 251 L543.5 255.6 L538.9 251 Z" fill="#1c1c1c"/><circle cx="543.5" cy="251" r="3.2" fill="#1c1c1c"/><path d="M543.5 251 V247.8 A3.2 3.2 0 0 0 540.3 251 Z M543.5 251 V254.2 A3.2 3.2 0 0 0 546.7 251 Z" fill="#ecdc28"/>
<line x1="538" y1="260.2" x2="549" y2="260.2" stroke="#cdcdcd" stroke-width="0.5" />
<path d="M540.3 267.3 V274 A3.4 1.3 0 0 0 547.1 274 V267.3 Z" fill="#ececec" stroke="#9c9c9c" stroke-width=".6"/><path d="M544.9 268.4 V275 A3.4 1.3 0 0 0 546.8 274 V268 Z" fill="#d2d2d2"/><ellipse cx="543.7" cy="267.3" rx="3.4" ry="1.3" fill="#f8f8f8" stroke="#9c9c9c" stroke-width=".6"/>
<line x1="538" y1="279" x2="549" y2="279" stroke="#cdcdcd" stroke-width="0.5" />
<path d="M538.6 284.2 V293.8 H548.6" fill="none" stroke="#1e1e1e" stroke-width=".7"/><path d="M537.7 285.8 L538.6 284 L539.5 285.8 M547 292.9 L548.8 293.8 L547 294.7" fill="none" stroke="#1e1e1e" stroke-width=".6"/>
<path d="M544.4 284.90000000000003 L548.0999999999999 288.6 L544.4 292.3 L540.7 288.6 Z" fill="#1c1c1c"/><circle cx="544.4" cy="288.6" r="2.3" fill="#1c1c1c"/><path d="M544.4 288.6 V286.3 A2.3 2.3 0 0 0 542.1 288.6 Z M544.4 288.6 V290.90000000000003 A2.3 2.3 0 0 0 546.6999999999999 288.6 Z" fill="#ecdc28"/>
<circle cx="539.4" cy="300.2" r=".6" fill="#6a6a6a"/>
<circle cx="542" cy="300.2" r=".6" fill="#6a6a6a"/>
<circle cx="544.6" cy="300.2" r=".6" fill="#6a6a6a"/>
<circle cx="547.2" cy="300.2" r=".6" fill="#6a6a6a"/>
<circle cx="539.4" cy="302.7" r=".6" fill="#6a6a6a"/>
<circle cx="542" cy="302.7" r=".6" fill="#6a6a6a"/>
<circle cx="544.6" cy="302.7" r=".6" fill="#6a6a6a"/>
<circle cx="547.2" cy="302.7" r=".6" fill="#6a6a6a"/>
<circle cx="539.4" cy="305.2" r=".6" fill="#6a6a6a"/>
<circle cx="542" cy="305.2" r=".6" fill="#6a6a6a"/>
<circle cx="544.6" cy="305.2" r=".6" fill="#6a6a6a"/>
<circle cx="547.2" cy="305.2" r=".6" fill="#6a6a6a"/>
<circle cx="539.4" cy="307.7" r=".6" fill="#6a6a6a"/>
<circle cx="542" cy="307.7" r=".6" fill="#6a6a6a"/>
<circle cx="544.6" cy="307.7" r=".6" fill="#6a6a6a"/>
<circle cx="547.2" cy="307.7" r=".6" fill="#6a6a6a"/>
<circle cx="542" cy="304" r="1.3" fill="#e0422a"/>
<rect x="555.6" y="44" width="63.4" height="354.5" fill="#ececec" />
<rect x="555.6" y="44" width="63.4" height="6.7" fill="url(#gP)" />
<rect x="555.3" y="44" width="0.5" height="354.5" fill="#c9c9c9" />
<text x="557" y="49.2" font-size="5.4" fill="#1e1e1e" textLength="17.8" lengthAdjust="spacingAndGlyphs" stroke="#1e1e1e" stroke-width=".12">Visibles</text>
<rect x="556.2" y="52.4" width="63.2" height="344.4" fill="#ebebeb" stroke="#cfcfcf" stroke-width=".5"/>
<rect x="558.4" y="54.2" width="61" height="341.4" fill="#eaeaea" stroke="#d6d6d6" stroke-width=".5"/>
<rect x="558.7" y="56.2" width="60.3" height="7.3" fill="#e2e2e2" />
<line x1="558.7" y1="63.5" x2="619" y2="63.5" stroke="#d0d0d0" stroke-width="0.5" />
<path d="M561 63.7 V57.6 A1.4 1.4 0 0 1 562.4 56.2 H578.5 A1.4 1.4 0 0 1 579.9 57.6 V63.7 Z" fill="#fbfbfb" stroke="#d2d2d2" stroke-width=".4"/>
<path d="M580.7 63.4 V57.8 A1.4 1.4 0 0 1 582.1 56.4 H602.1 A1.4 1.4 0 0 1 603.5 57.8 V63.4 Z" fill="#e9e9e9" stroke="#c8c8c8" stroke-width=".4"/>
<text x="564" y="61.8" font-size="4.95" fill="#1e1e1e" textLength="12.2" lengthAdjust="spacingAndGlyphs">Layer</text>
<text x="584" y="61.8" font-size="4.85" fill="#1e1e1e" textLength="15.6" lengthAdjust="spacingAndGlyphs">Render</text>
<path d="M559.8 66.9 L563.3 70.3 L559.8 73.7 Z" fill="#1a3cf0"/>
<rect x="564.9" y="66.8" width="7" height="7" fill="#f7f7f7" rx="1.3"/>
<rect x="566.6" y="68.0" width="3.7" height="4.6" fill="#860c06" />
<rect x="574.2" y="67.2" width="6.2" height="6.2" fill="#fff" rx="1.2" stroke="#d4d4d4" stroke-width=".3"/>
<text x="584.8" y="72.05" font-size="4.9" fill="#1e1e1e" stroke="#1e1e1e" stroke-width=".14">F.Cu</text>
<rect x="564.9" y="74.83" width="7" height="7" fill="#f7f7f7" rx="1.3"/>
<rect x="566.6" y="76.03" width="3.7" height="4.6" fill="#0c860c" />
<rect x="574.2" y="75.23" width="6.2" height="6.2" fill="#3d8af7" rx="1.3"/>
<path d="M575.7 78.43 L577 79.93 L579.1 76.63" fill="none" stroke="#fff" stroke-width=".9"/>
<text x="584.8" y="80.08" font-size="4.9" fill="#1e1e1e" stroke="#1e1e1e" stroke-width=".14">B.Cu</text>
<rect x="564.9" y="82.85" width="7" height="7" fill="#f7f7f7" rx="1.3"/>
<rect x="566.6" y="84.05" width="3.7" height="4.6" fill="#860c86" />
<rect x="574.2" y="83.25" width="6.2" height="6.2" fill="#3d8af7" rx="1.3"/>
<path d="M575.7 86.45 L577 87.95 L579.1 84.65" fill="none" stroke="#fff" stroke-width=".9"/>
<text x="584.8" y="88.1" font-size="4.9" fill="#1e1e1e" stroke="#1e1e1e" stroke-width=".14">F.Adhes</text>
<rect x="564.9" y="90.88" width="7" height="7" fill="#f7f7f7" rx="1.3"/>
<rect x="566.6" y="92.08" width="3.7" height="4.6" fill="#0c0c86" />
<rect x="574.2" y="91.28" width="6.2" height="6.2" fill="#3d8af7" rx="1.3"/>
<path d="M575.7 94.48 L577 95.98 L579.1 92.68" fill="none" stroke="#fff" stroke-width=".9"/>
<text x="584.8" y="96.13" font-size="4.9" fill="#1e1e1e" stroke="#1e1e1e" stroke-width=".14">B.Adhes</text>
<rect x="564.9" y="98.9" width="7" height="7" fill="#f7f7f7" rx="1.3"/>
<rect x="566.6" y="100.1" width="3.7" height="4.6" fill="#860c06" />
<rect x="574.2" y="99.3" width="6.2" height="6.2" fill="#3d8af7" rx="1.3"/>
<path d="M575.7 102.50 L577 104.00 L579.1 100.70" fill="none" stroke="#fff" stroke-width=".9"/>
<text x="584.8" y="104.15" font-size="4.9" fill="#1e1e1e" stroke="#1e1e1e" stroke-width=".14">F.Paste</text>
<rect x="564.9" y="106.93" width="7" height="7" fill="#f7f7f7" rx="1.3"/>
<rect x="566.6" y="108.13" width="3.7" height="4.6" fill="#2cc4c4" />
<rect x="574.2" y="107.33" width="6.2" height="6.2" fill="#3d8af7" rx="1.3"/>
<path d="M575.7 110.53 L577 112.03 L579.1 108.73" fill="none" stroke="#fff" stroke-width=".9"/>
<text x="584.8" y="112.18" font-size="4.9" fill="#1e1e1e" stroke="#1e1e1e" stroke-width=".14">B.Paste</text>
<rect x="564.9" y="114.96" width="7" height="7" fill="#f7f7f7" rx="1.3"/>
<rect x="566.6" y="116.16" width="3.7" height="4.6" fill="#0c8686" />
<rect x="574.2" y="115.36" width="6.2" height="6.2" fill="#3d8af7" rx="1.3"/>
<path d="M575.7 118.56 L577 120.06 L579.1 116.76" fill="none" stroke="#fff" stroke-width=".9"/>
<text x="584.8" y="120.21" font-size="4.9" fill="#1e1e1e" stroke="#1e1e1e" stroke-width=".14">F.SilkS</text>
<rect x="564.9" y="122.98" width="7" height="7" fill="#f7f7f7" rx="1.3"/>
<rect x="566.6" y="124.18" width="3.7" height="4.6" fill="#860c86" />
<rect x="574.2" y="123.38" width="6.2" height="6.2" fill="#3d8af7" rx="1.3"/>
<path d="M575.7 126.58 L577 128.08 L579.1 124.78" fill="none" stroke="#fff" stroke-width=".9"/>
<text x="584.8" y="128.23" font-size="4.9" fill="#1e1e1e" stroke="#1e1e1e" stroke-width=".14">B.SilkS</text>
<rect x="564.9" y="131.01" width="7" height="7" fill="#f7f7f7" rx="1.3"/>
<rect x="566.6" y="132.21" width="3.7" height="4.6" fill="#860c86" />
<rect x="574.2" y="131.41" width="6.2" height="6.2" fill="#3d8af7" rx="1.3"/>
<path d="M575.7 134.61 L577 136.11 L579.1 132.81" fill="none" stroke="#fff" stroke-width=".9"/>
<text x="584.8" y="136.26" font-size="4.9" fill="#1e1e1e" stroke="#1e1e1e" stroke-width=".14">F.Mask</text>
<rect x="564.9" y="139.03" width="7" height="7" fill="#f7f7f7" rx="1.3"/>
<rect x="566.6" y="140.23" width="3.7" height="4.6" fill="#86860c" />
<rect x="574.2" y="139.43" width="6.2" height="6.2" fill="#3d8af7" rx="1.3"/>
<path d="M575.7 142.63 L577 144.13 L579.1 140.83" fill="none" stroke="#fff" stroke-width=".9"/>
<text x="584.8" y="144.28" font-size="4.9" fill="#1e1e1e" stroke="#1e1e1e" stroke-width=".14">B.Mask</text>
<rect x="564.9" y="147.06" width="7" height="7" fill="#f7f7f7" rx="1.3"/>
<rect x="566.6" y="148.26" width="3.7" height="4.6" fill="#c6c6c6" />
<rect x="574.2" y="147.46" width="6.2" height="6.2" fill="#3d8af7" rx="1.3"/>
<path d="M575.7 150.66 L577 152.16 L579.1 148.86" fill="none" stroke="#fff" stroke-width=".9"/>
<text x="584.8" y="152.31" font-size="4.9" fill="#1e1e1e" stroke="#1e1e1e" stroke-width=".14">Dwgs.User</text>
<rect x="564.9" y="155.09" width="7" height="7" fill="#f7f7f7" rx="1.3"/>
<rect x="566.6" y="156.29" width="3.7" height="4.6" fill="#0c0c86" />
<rect x="574.2" y="155.49" width="6.2" height="6.2" fill="#3d8af7" rx="1.3"/>
<path d="M575.7 158.69 L577 160.19 L579.1 156.89" fill="none" stroke="#fff" stroke-width=".9"/>
<text x="584.8" y="160.34" font-size="4.9" fill="#1e1e1e" stroke="#1e1e1e" stroke-width=".14">Cmts.User</text>
<rect x="564.9" y="163.11" width="7" height="7" fill="#f7f7f7" rx="1.3"/>
<rect x="566.6" y="164.31" width="3.7" height="4.6" fill="#0c860c" />
<rect x="574.2" y="163.51" width="6.2" height="6.2" fill="#3d8af7" rx="1.3"/>
<path d="M575.7 166.71 L577 168.21 L579.1 164.91" fill="none" stroke="#fff" stroke-width=".9"/>
<text x="584.8" y="168.36" font-size="4.9" fill="#1e1e1e" stroke="#1e1e1e" stroke-width=".14">Eco1.User</text>
<rect x="564.9" y="171.14" width="7" height="7" fill="#f7f7f7" rx="1.3"/>
<rect x="566.6" y="172.34" width="3.7" height="4.6" fill="#c6c60c" />
<rect x="574.2" y="171.54" width="6.2" height="6.2" fill="#3d8af7" rx="1.3"/>
<path d="M575.7 174.74 L577 176.24 L579.1 172.94" fill="none" stroke="#fff" stroke-width=".9"/>
<text x="584.8" y="176.39" font-size="4.9" fill="#1e1e1e" stroke="#1e1e1e" stroke-width=".14">Eco2.User</text>
<rect x="564.9" y="179.16" width="7" height="7" fill="#f7f7f7" rx="1.3"/>
<rect x="566.6" y="180.36" width="3.7" height="4.6" fill="#c6c60c" />
<rect x="574.2" y="179.56" width="6.2" height="6.2" fill="#3d8af7" rx="1.3"/>
<path d="M575.7 182.76 L577 184.26 L579.1 180.96" fill="none" stroke="#fff" stroke-width=".9"/>
<text x="584.8" y="184.41" font-size="4.9" fill="#1e1e1e" stroke="#1e1e1e" stroke-width=".14">Edge.Cuts</text>
<rect x="564.9" y="187.19" width="7" height="7" fill="#f7f7f7" rx="1.3"/>
<rect x="566.6" y="188.39" width="3.7" height="4.6" fill="#c60cc6" />
<rect x="574.2" y="187.59" width="6.2" height="6.2" fill="#3d8af7" rx="1.3"/>
<path d="M575.7 190.79 L577 192.29 L579.1 188.99" fill="none" stroke="#fff" stroke-width=".9"/>
<text x="584.8" y="192.44" font-size="4.9" fill="#1e1e1e" stroke="#1e1e1e" stroke-width=".14">Margin</text>
<rect x="564.9" y="195.22" width="7" height="7" fill="#f7f7f7" rx="1.3"/>
<rect x="566.6" y="196.42" width="3.7" height="4.6" fill="#868686" />
<rect x="574.2" y="195.62" width="6.2" height="6.2" fill="#3d8af7" rx="1.3"/>
<path d="M575.7 198.82 L577 200.32 L579.1 197.02" fill="none" stroke="#fff" stroke-width=".9"/>
<text x="584.8" y="200.47" font-size="4.9" fill="#1e1e1e" stroke="#1e1e1e" stroke-width=".14">F.CrtYd</text>
<rect x="564.9" y="203.24" width="7" height="7" fill="#f7f7f7" rx="1.3"/>
<rect x="566.6" y="204.44" width="3.7" height="4.6" fill="#c6c60c" />
<rect x="574.2" y="203.64" width="6.2" height="6.2" fill="#3d8af7" rx="1.3"/>
<path d="M575.7 206.84 L577 208.34 L579.1 205.04" fill="none" stroke="#fff" stroke-width=".9"/>
<text x="584.8" y="208.49" font-size="4.9" fill="#1e1e1e" stroke="#1e1e1e" stroke-width=".14">B.CrtYd</text>
<rect x="564.9" y="211.27" width="7" height="7" fill="#f7f7f7" rx="1.3"/>
<rect x="566.6" y="212.47" width="3.7" height="4.6" fill="#c6c60c" />
<rect x="574.2" y="211.67" width="6.2" height="6.2" fill="#3d8af7" rx="1.3"/>
<path d="M575.7 214.87 L577 216.37 L579.1 213.07" fill="none" stroke="#fff" stroke-width=".9"/>
<text x="584.8" y="216.52" font-size="4.9" fill="#1e1e1e" stroke="#1e1e1e" stroke-width=".14">F.Fab</text>
<rect x="564.9" y="219.29" width="7" height="7" fill="#f7f7f7" rx="1.3"/>
<rect x="566.6" y="220.49" width="3.7" height="4.6" fill="#860c06" />
<rect x="574.2" y="219.69" width="6.2" height="6.2" fill="#3d8af7" rx="1.3"/>
<path d="M575.7 222.89 L577 224.39 L579.1 221.09" fill="none" stroke="#fff" stroke-width=".9"/>
<text x="584.8" y="224.54" font-size="4.9" fill="#1e1e1e" stroke="#1e1e1e" stroke-width=".14">B.Fab</text>
<rect x="0" y="398.6" width="619" height="15.4" fill="#e9e9e9" />
<rect x="0" y="398.5" width="619" height="0.5" fill="#cdcdcd" />
<text x="4.5" y="404.9" font-size="5.35" fill="#1a6672" stroke="#1a6672" stroke-width=".1">Footprint</text>
<text x="4.5" y="410.9" font-size="5.35" fill="#1a6672" stroke="#1a6672" stroke-width=".1">J0a2</text>
<text x="38.7" y="404.9" font-size="5.35" fill="#8a8a14" stroke="#8a8a14" stroke-width=".1">Pad</text>
<text x="38.7" y="410.9" font-size="5.35" fill="#8a8a14" stroke="#8a8a14" stroke-width=".1">1</text>
<text x="61.4" y="404.9" font-size="5.35" fill="#1a6672" stroke="#1a6672" stroke-width=".1">Net</text>
<text x="61.4" y="410.9" font-size="5.35" fill="#1a6672" stroke="#1a6672" stroke-width=".1">Net-(J0a2-Pad1)</text>
<text x="112" y="404.9" font-size="5.35" fill="#1a6672" stroke="#1a6672" stroke-width=".1">Net Code</text>
<text x="112" y="410.9" font-size="5.35" fill="#1a6672" stroke="#1a6672" stroke-width=".1">15</text>
<text x="150" y="404.9" font-size="5.35" fill="#2a8a2a" stroke="#2a8a2a" stroke-width=".1">Layer</text>
<text x="150" y="410.9" font-size="5.35" fill="#2a8a2a" stroke="#2a8a2a" stroke-width=".1">B.Cu</text>
<text x="186" y="404.9" font-size="5.35" fill="#0c860c" stroke="#0c860c" stroke-width=".1">Shape</text>
<text x="186" y="410.9" font-size="5.35" fill="#0c860c" stroke="#0c860c" stroke-width=".1">Rect</text>
<text x="223" y="404.9" font-size="5.35" fill="#8e1e1e" stroke="#8e1e1e" stroke-width=".1">Width</text>
<text x="223" y="410.9" font-size="5.35" fill="#8e1e1e" stroke="#8e1e1e" stroke-width=".1">5.000 mm</text>
<text x="260.4" y="404.9" font-size="5.35" fill="#8e1e1e" stroke="#8e1e1e" stroke-width=".1">Height</text>
<text x="260.4" y="410.9" font-size="5.35" fill="#8e1e1e" stroke="#8e1e1e" stroke-width=".1">10.000 mm</text>
<text x="301.7" y="404.9" font-size="5.35" fill="#8e1e1e" stroke="#8e1e1e" stroke-width=".1">Drill</text>
<text x="301.7" y="410.9" font-size="5.35" fill="#8e1e1e" stroke="#8e1e1e" stroke-width=".1">0.000 mm</text>
<text x="339.7" y="404.9" font-size="5.35" fill="#1e1ecc" stroke="#1e1ecc" stroke-width=".1">Angle</text>
<text x="339.7" y="410.9" font-size="5.35" fill="#1e1ecc" stroke="#1e1ecc" stroke-width=".1">0.0(+270.0)</text>
<text x="381.7" y="404.9" font-size="5.35" fill="#1e1ecc" stroke="#1e1ecc" stroke-width=".1">Position</text>
<text x="381.7" y="410.9" font-size="5.35" fill="#1e1ecc" stroke="#1e1ecc" stroke-width=".1">47.000 mm, 105.000 mm</text>
<rect x="0" y="411.5" width="619" height="2.5" fill="#ececec" />
<rect x="0" y="411.4" width="619" height="0.5" fill="#c4c4c4" />
<g clip-path="url(#bot)">
<text x="295.5" y="416.9" font-size="5.35" fill="#333" textLength="221" lengthAdjust="spacingAndGlyphs">Z 1.45     X 46.500000  Y 105.000000     dx 46.500000  dy 105.000000  dist 114.836</text>
<text x="2.5" y="416.9" font-size="5.35" fill="#333" textLength="57" lengthAdjust="spacingAndGlyphs">Select Working Layer</text>
</g>
<rect x="74.3" y="341.2" width="139" height="73" rx="3.6" fill="rgba(0,0,0,.13)"/>
<rect x="75.3" y="341.6" width="136.9" height="70.8" rx="3" fill="url(#gMenu)" stroke="#bdbdbd" stroke-width=".4"/>
<rect x="75.3" y="343.1" width="136.9" height="7.6" fill="#2d6bd4" />
<line x1="75.5" y1="353.9" x2="212" y2="353.9" stroke="#cbcbcb" stroke-width="0.8" />
<line x1="75.5" y1="366.7" x2="212" y2="366.7" stroke="#cbcbcb" stroke-width="0.8" />
<line x1="75.5" y1="404.2" x2="212" y2="404.2" stroke="#d6d6d6" stroke-width="0.6" />
<text x="84.7" y="349.0" font-size="6.05" fill="#fff" textLength="95" lengthAdjust="spacingAndGlyphs" stroke="#fff" stroke-width=".18">Pad 1 on F.Cu, Non-copper of J0a2</text>
<path d="M203.2 344.9 L207 347.0 L203.2 349.1 Z" fill="#fff"/>
<text x="84.7" y="362.4" font-size="6.05" fill="#1e1e1e" textLength="62" lengthAdjust="spacingAndGlyphs" stroke="#1e1e1e" stroke-width=".18">Footprint J0a2 on B.Cu</text>
<path d="M203.2 358.3 L207 360.4 L203.2 362.5 Z" fill="#1e1e1e"/>
<text x="84.7" y="375.7" font-size="6.05" fill="#1e1e1e" stroke="#1e1e1e" stroke-width=".18">Get and Move Footprint</text>
<text x="208.6" y="375.7" font-size="6.05" fill="#1e1e1e" text-anchor="end">T</text>
<text x="84.7" y="383.1" font-size="6.05" fill="#1e1e1e" stroke="#1e1e1e" stroke-width=".18">Begin Track</text>
<text x="208.6" y="383.1" font-size="6.05" fill="#1e1e1e" text-anchor="end">X</text>
<text x="84.7" y="391.2" font-size="6.05" fill="#1e1e1e" stroke="#1e1e1e" stroke-width=".18">Select Track Width</text>
<path d="M203.2 387.1 L207 389.2 L203.2 391.3 Z" fill="#1e1e1e"/>
<text x="84.7" y="399.0" font-size="6.05" fill="#1e1e1e" stroke="#1e1e1e" stroke-width=".18">Select Working Layer</text>
<path d="M141.9 406.9 H145.9 L143.9 410.1 Z" fill="#1e1e1e"/>
</svg></body></html>
